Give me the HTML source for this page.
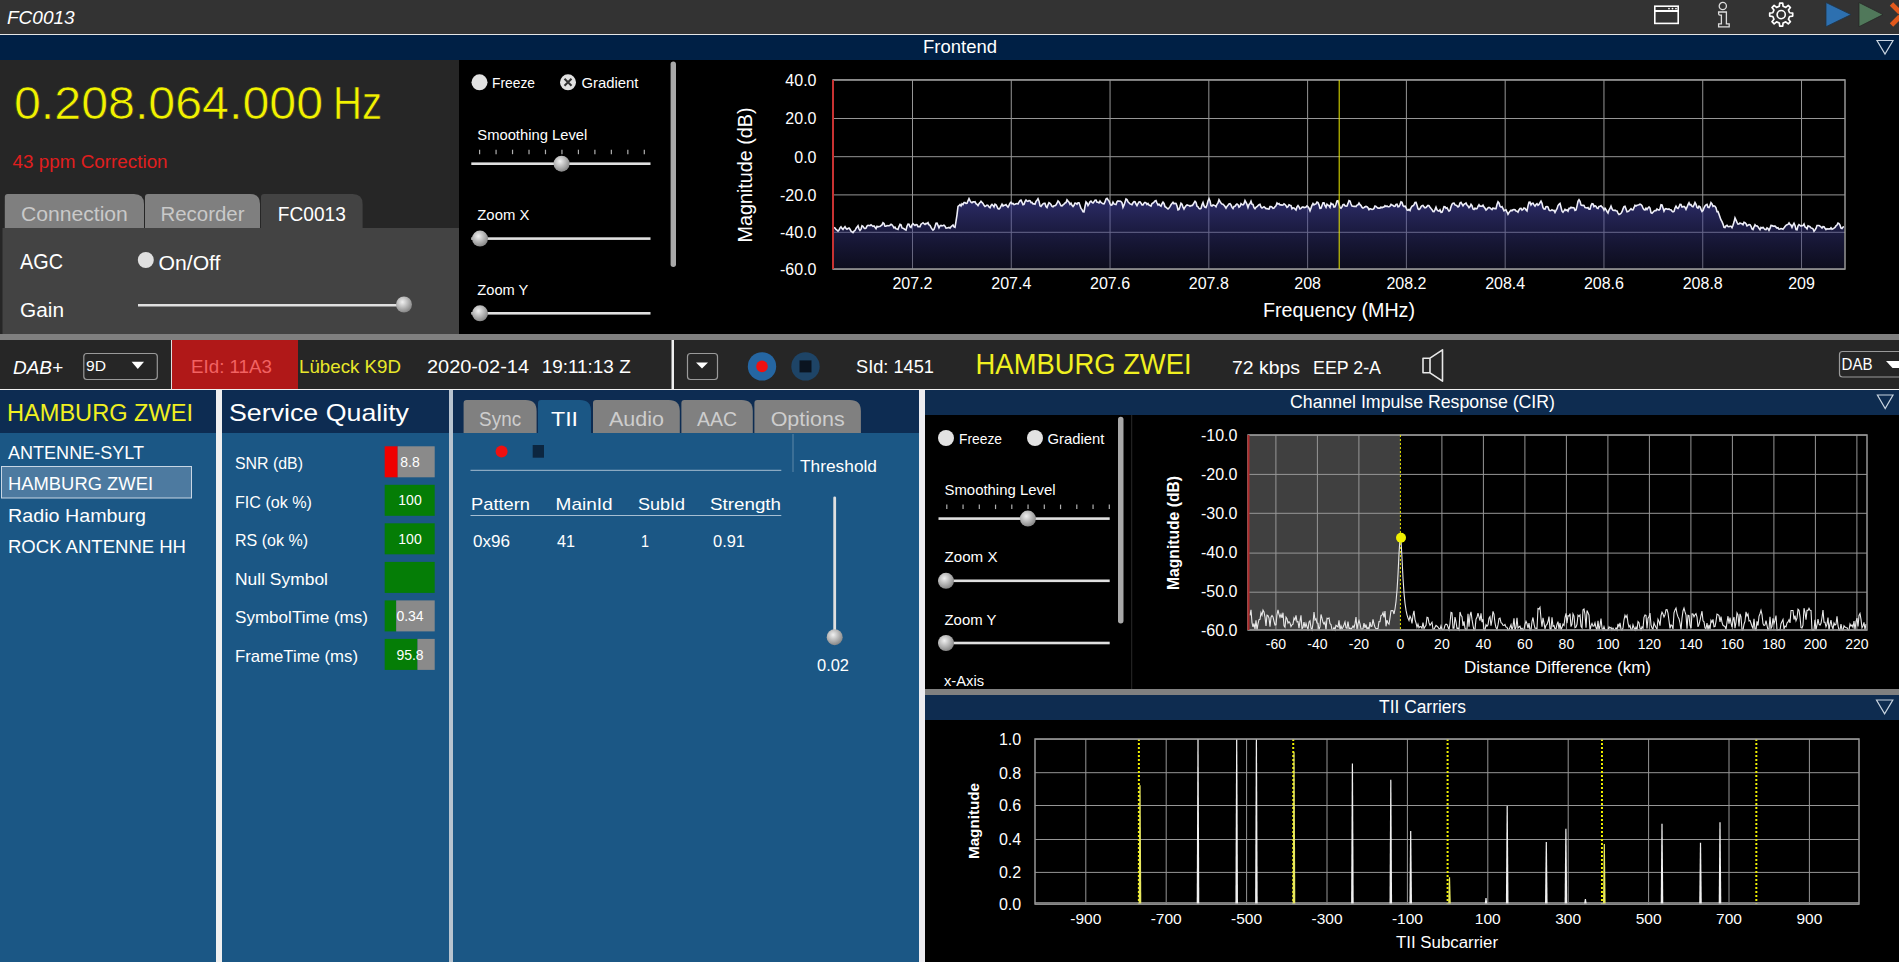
<!DOCTYPE html>
<html><head><meta charset="utf-8"><style>html,body{margin:0;padding:0;background:#000;overflow:hidden}svg{display:block}text{font-family:"Liberation Sans", sans-serif}</style></head>
<body><svg width="1899" height="962" viewBox="0 0 1899 962" font-family='"Liberation Sans", sans-serif'>
<rect x="0" y="0" width="1899" height="34" fill="#333333" />
<rect x="0" y="34" width="1899" height="1" fill="#e6e6e6" />
<rect x="0" y="35" width="1899" height="25" fill="#002045" />
<rect x="0" y="60" width="459" height="274" fill="#262626" />
<rect x="459" y="60" width="1440" height="274" fill="#000000" />
<rect x="0" y="334" width="1899" height="6" fill="#808080" />
<rect x="0" y="340" width="1899" height="49" fill="#262626" />
<rect x="0" y="389" width="1899" height="1" fill="#f0f0f0" />
<rect x="0" y="390" width="216" height="43" fill="#0d2c52" />
<rect x="0" y="433" width="216" height="529" fill="#1b5785" />
<rect x="222" y="390" width="227" height="43" fill="#0d2c52" />
<rect x="222" y="433" width="227" height="529" fill="#1b5785" />
<rect x="453" y="390" width="466" height="43" fill="#0d2c52" />
<rect x="453" y="433" width="466" height="529" fill="#1b5785" />
<rect x="216" y="390" width="6" height="572" fill="#f0f0f0" />
<rect x="449" y="390" width="4" height="572" fill="#b8c4d0" />
<rect x="919" y="390" width="6" height="572" fill="#ececf0" />
<rect x="925" y="390" width="974" height="25" fill="#0e2c50" />
<rect x="925" y="415" width="974" height="274" fill="#000" />
<rect x="925" y="689" width="974" height="6" fill="#808080" />
<rect x="925" y="695" width="974" height="25" fill="#0e2c50" />
<rect x="925" y="720" width="974" height="242" fill="#000" />
<text x="7" y="23.9" font-size="19" fill="#fff" text-anchor="start" font-style="italic">FC0013</text>
<g fill="none" stroke="#fff" stroke-width="1.6"><rect x="1654.8" y="6.2" width="23.4" height="17.2"/><line x1="1655" y1="11" x2="1678" y2="11" stroke-width="2"/></g>
<circle cx="1669" cy="8.6" r="0.9" fill="#fff"/>
<circle cx="1672.5" cy="8.6" r="0.9" fill="#fff"/>
<circle cx="1676" cy="8.6" r="0.9" fill="#fff"/>
<g fill="none" stroke="#ddd" stroke-width="1.3"><circle cx="1722.8" cy="6" r="3.6"/><path d="M1718.6 12 h7.8 v11.8 h2.8 v3 h-10.6 v-3 h2.8 v-8.6 h-1.4 q-1.4 0 -1.4 -1.6 z"/></g>
<polygon points="1789.59,12.72 1792.70,13.10 1792.70,16.10 1789.59,16.48 1788.46,19.21 1790.40,21.67 1788.27,23.80 1785.81,21.86 1783.08,22.99 1782.70,26.10 1779.70,26.10 1779.32,22.99 1776.59,21.86 1774.13,23.80 1772.00,21.67 1773.94,19.21 1772.81,16.48 1769.70,16.10 1769.70,13.10 1772.81,12.72 1773.94,9.99 1772.00,7.53 1774.13,5.40 1776.59,7.34 1779.32,6.21 1779.70,3.10 1782.70,3.10 1783.08,6.21 1785.81,7.34 1788.27,5.40 1790.40,7.53 1788.46,9.99" fill="none" stroke="#fff" stroke-width="1.7" stroke-linejoin="round"/>
<circle cx="1781.2" cy="14.6" r="4.1" fill="none" stroke="#fff" stroke-width="1.6"/>
<polygon points="1826,2.5 1851,14.6 1826,26.7" fill="#2d70b0" stroke="#1f3448" stroke-width="0.8"/>
<polygon points="1859,2.5 1883,14.6 1859,26.7" fill="#50785a" stroke="#262626" stroke-width="0.8"/>
<path d="M1891.5 4 L1900 12.5 M1891.5 25 L1900 16.5" stroke="#e2591c" stroke-width="4.8"/>
<text x="960" y="52.9" font-size="18" fill="#fff" text-anchor="middle" textLength="74" lengthAdjust="spacingAndGlyphs" >Frontend</text>
<polygon points="1877,40.5 1893,40.5 1885,54" fill="none" stroke="#c8d4e0" stroke-width="1.2"/>
<text x="14" y="119.2" font-size="46" fill="#f2f200" text-anchor="start" textLength="309" lengthAdjust="spacingAndGlyphs" stroke="#262626" stroke-width="0.6">0.208.064.000</text>
<text x="333" y="119.2" font-size="46" fill="#f2f200" text-anchor="start" textLength="49" lengthAdjust="spacingAndGlyphs" stroke="#262626" stroke-width="0.6">Hz</text>
<text x="12.6" y="167.6" font-size="18" fill="#e01e1e" text-anchor="start" textLength="155" lengthAdjust="spacingAndGlyphs" >43 ppm Correction</text>
<rect x="2.5" y="228" width="456.5" height="106" fill="#434343" />
<path d="M4.8 228 V197 Q4.8 194 7.8 194 H134 Q144 194 144 204 V228 Z" fill="#7f7f7f"/>
<text x="74.4" y="220.8" font-size="20" fill="#c9c9c9" text-anchor="middle" textLength="107" lengthAdjust="spacingAndGlyphs" >Connection</text>
<path d="M145 228 V197 Q145 194 148 194 H250 Q260 194 260 204 V228 Z" fill="#7f7f7f"/>
<text x="202.5" y="220.8" font-size="20" fill="#c9c9c9" text-anchor="middle" textLength="84" lengthAdjust="spacingAndGlyphs" >Recorder</text>
<path d="M261 228 V197 Q261 194 264 194 H352.6 Q362.6 194 362.6 204 V228 Z" fill="#434343"/>
<text x="311.8" y="220.8" font-size="20" fill="#fff" text-anchor="middle" textLength="68" lengthAdjust="spacingAndGlyphs" >FC0013</text>
<text x="20" y="268.8" font-size="21.5" fill="#fff" text-anchor="start" textLength="43" lengthAdjust="spacingAndGlyphs" >AGC</text>
<circle cx="145.8" cy="260" r="8" fill="#e0e0e0"/>
<text x="158.5" y="270.2" font-size="20.5" fill="#fff" text-anchor="start" textLength="62" lengthAdjust="spacingAndGlyphs" >On/Off</text>
<text x="20" y="316.8" font-size="20" fill="#fff" text-anchor="start" textLength="44" lengthAdjust="spacingAndGlyphs" >Gain</text>
<rect x="138" y="304" width="266" height="2.5" fill="#e0e0e0" />
<defs><radialGradient id="knob" cx="0.4" cy="0.35" r="0.7"><stop offset="0" stop-color="#f0f0f0"/><stop offset="1" stop-color="#808080"/></radialGradient></defs>
<circle cx="404" cy="304.5" r="8" fill="url(#knob)"/>
<circle cx="479.5" cy="82.3" r="8" fill="#e2e2e2"/>
<text x="492" y="87.8" font-size="15" fill="#fff" text-anchor="start" textLength="43" lengthAdjust="spacingAndGlyphs" >Freeze</text>
<circle cx="568" cy="82.3" r="8" fill="#e2e2e2"/>
<path d="M564.5 78.8 L571.5 85.8 M571.5 78.8 L564.5 85.8" stroke="#333" stroke-width="2"/>
<text x="581.5" y="87.8" font-size="15" fill="#fff" text-anchor="start" textLength="57" lengthAdjust="spacingAndGlyphs" >Gradient</text>
<rect x="670.6" y="61.5" width="5.4" height="205.5" fill="#a8a8a8" rx="2.7"/>
<text x="477.3" y="139.8" font-size="14.5" fill="#fff" text-anchor="start" textLength="110" lengthAdjust="spacingAndGlyphs" >Smoothing Level</text>
<line x1="479.6" y1="149.7" x2="479.6" y2="154.2" stroke="#b0b0b0" stroke-width="1.2" />
<line x1="496.07000000000005" y1="149.7" x2="496.07000000000005" y2="154.2" stroke="#b0b0b0" stroke-width="1.2" />
<line x1="512.54" y1="149.7" x2="512.54" y2="154.2" stroke="#b0b0b0" stroke-width="1.2" />
<line x1="529.01" y1="149.7" x2="529.01" y2="154.2" stroke="#b0b0b0" stroke-width="1.2" />
<line x1="545.48" y1="149.7" x2="545.48" y2="154.2" stroke="#b0b0b0" stroke-width="1.2" />
<line x1="561.95" y1="149.7" x2="561.95" y2="154.2" stroke="#b0b0b0" stroke-width="1.2" />
<line x1="578.4200000000001" y1="149.7" x2="578.4200000000001" y2="154.2" stroke="#b0b0b0" stroke-width="1.2" />
<line x1="594.89" y1="149.7" x2="594.89" y2="154.2" stroke="#b0b0b0" stroke-width="1.2" />
<line x1="611.36" y1="149.7" x2="611.36" y2="154.2" stroke="#b0b0b0" stroke-width="1.2" />
<line x1="627.83" y1="149.7" x2="627.83" y2="154.2" stroke="#b0b0b0" stroke-width="1.2" />
<line x1="644.3" y1="149.7" x2="644.3" y2="154.2" stroke="#b0b0b0" stroke-width="1.2" />
<rect x="471.3" y="162.39999999999998" width="179.2" height="2.6" fill="#e0e0e0" />
<circle cx="561.6" cy="163.7" r="8" fill="url(#knob)"/>
<text x="477.3" y="219.8" font-size="14.5" fill="#fff" text-anchor="start" textLength="52" lengthAdjust="spacingAndGlyphs" >Zoom X</text>
<rect x="471.3" y="237.29999999999998" width="179.2" height="2.6" fill="#e0e0e0" />
<circle cx="480" cy="238.6" r="8" fill="url(#knob)"/>
<text x="477.3" y="294.8" font-size="14.5" fill="#fff" text-anchor="start" textLength="51" lengthAdjust="spacingAndGlyphs" >Zoom Y</text>
<rect x="471.3" y="312.0" width="179.2" height="2.6" fill="#e0e0e0" />
<circle cx="480" cy="313.3" r="8" fill="url(#knob)"/>
<line x1="833" y1="79.8" x2="1845" y2="79.8" stroke="#969696" stroke-width="1" />
<line x1="833" y1="118.5" x2="1845" y2="118.5" stroke="#969696" stroke-width="1" />
<line x1="833" y1="156.7" x2="1845" y2="156.7" stroke="#969696" stroke-width="1" />
<line x1="833" y1="194.9" x2="1845" y2="194.9" stroke="#969696" stroke-width="1" />
<line x1="833" y1="232.3" x2="1845" y2="232.3" stroke="#969696" stroke-width="1" />
<line x1="833" y1="269.2" x2="1845" y2="269.2" stroke="#969696" stroke-width="1" />
<line x1="912.5" y1="80" x2="912.5" y2="269" stroke="#969696" stroke-width="1" />
<line x1="1011.2799999999944" y1="80" x2="1011.2799999999944" y2="269" stroke="#969696" stroke-width="1" />
<line x1="1110.0600000000027" y1="80" x2="1110.0600000000027" y2="269" stroke="#969696" stroke-width="1" />
<line x1="1208.8399999999972" y1="80" x2="1208.8399999999972" y2="269" stroke="#969696" stroke-width="1" />
<line x1="1307.6200000000056" y1="80" x2="1307.6200000000056" y2="269" stroke="#969696" stroke-width="1" />
<line x1="1406.4" y1="80" x2="1406.4" y2="269" stroke="#969696" stroke-width="1" />
<line x1="1505.1799999999944" y1="80" x2="1505.1799999999944" y2="269" stroke="#969696" stroke-width="1" />
<line x1="1603.9600000000028" y1="80" x2="1603.9600000000028" y2="269" stroke="#969696" stroke-width="1" />
<line x1="1702.739999999997" y1="80" x2="1702.739999999997" y2="269" stroke="#969696" stroke-width="1" />
<line x1="1801.5200000000054" y1="80" x2="1801.5200000000054" y2="269" stroke="#969696" stroke-width="1" />
<defs><linearGradient id="specfill" gradientUnits="userSpaceOnUse" x1="0" y1="200" x2="0" y2="269"><stop offset="0" stop-color="#4a4ab0" stop-opacity="0.58"/><stop offset="1" stop-color="#20204a" stop-opacity="0.4"/></linearGradient></defs>
<polygon points="833,269 834.0,227.4 835.0,228.1 836.0,229.5 837.0,230.2 838.0,231.1 839.0,230.1 840.0,228.0 841.0,226.9 842.0,228.4 843.0,229.4 844.0,227.9 845.0,226.7 846.0,228.4 847.0,229.2 848.0,228.4 849.0,228.0 850.0,229.3 851.0,231.2 852.0,231.8 853.0,232.6 854.0,231.2 855.0,230.5 856.0,228.4 857.0,227.1 858.0,225.7 859.0,228.8 860.0,230.4 861.0,229.2 862.0,225.8 863.0,226.4 864.0,227.9 865.0,228.6 866.0,228.2 867.0,226.1 868.0,225.3 869.0,225.5 870.0,225.6 871.0,224.8 872.0,225.6 873.0,226.3 874.0,226.0 875.0,227.3 876.0,228.6 877.0,226.4 878.0,226.8 879.0,226.5 880.0,226.5 881.0,225.7 882.0,224.9 883.0,222.8 884.0,223.5 885.0,226.3 886.0,226.3 887.0,225.5 888.0,225.7 889.0,225.6 890.0,225.2 891.0,224.2 892.0,224.9 893.0,226.1 894.0,227.8 895.0,227.2 896.0,228.8 897.0,229.1 898.0,229.5 899.0,226.6 900.0,224.3 901.0,224.9 902.0,227.9 903.0,228.3 904.0,228.8 905.0,229.6 906.0,230.1 907.0,226.2 908.0,224.1 909.0,224.3 910.0,226.7 911.0,227.5 912.0,224.8 913.0,223.6 914.0,224.7 915.0,225.5 916.0,224.7 917.0,224.8 918.0,226.6 919.0,226.6 920.0,226.7 921.0,224.3 922.0,223.5 923.0,222.7 924.0,223.7 925.0,224.5 926.0,223.4 927.0,223.6 928.0,222.7 929.0,224.9 930.0,225.3 931.0,227.4 932.0,228.9 933.0,230.1 934.0,229.3 935.0,226.4 936.0,223.2 937.0,223.1 938.0,225.4 939.0,227.8 940.0,225.9 941.0,225.4 942.0,225.8 943.0,225.6 944.0,225.2 945.0,226.2 946.0,228.1 947.0,228.0 948.0,227.7 949.0,227.4 950.0,228.2 951.0,226.7 952.0,225.8 953.0,225.0 954.0,226.9 955.0,227.3 956.0,221.4 957.0,214.8 958.0,206.4 959.0,205.7 960.0,204.6 961.0,206.0 962.0,203.8 963.0,204.6 964.0,202.5 965.0,202.6 966.0,203.5 967.0,203.3 968.0,200.8 969.0,198.6 970.0,200.7 971.0,202.1 972.0,202.8 973.0,201.9 974.0,201.9 975.0,201.6 976.0,203.6 977.0,204.3 978.0,205.6 979.0,203.8 980.0,202.6 981.0,201.2 982.0,202.4 983.0,203.5 984.0,205.4 985.0,206.5 986.0,205.9 987.0,205.1 988.0,205.5 989.0,206.9 990.0,207.7 991.0,205.4 992.0,204.4 993.0,205.4 994.0,207.0 995.0,204.1 996.0,204.7 997.0,206.7 998.0,208.6 999.0,209.1 1000.0,208.0 1001.0,206.0 1002.0,204.2 1003.0,206.0 1004.0,205.3 1005.0,205.2 1006.0,204.6 1007.0,206.1 1008.0,207.1 1009.0,205.4 1010.0,203.2 1011.0,202.2 1012.0,203.8 1013.0,203.5 1014.0,204.6 1015.0,204.3 1016.0,203.8 1017.0,203.6 1018.0,204.0 1019.0,202.1 1020.0,200.7 1021.0,200.1 1022.0,202.4 1023.0,204.8 1024.0,204.4 1025.0,201.7 1026.0,200.0 1027.0,201.1 1028.0,201.3 1029.0,200.5 1030.0,200.7 1031.0,202.6 1032.0,202.4 1033.0,204.0 1034.0,203.9 1035.0,204.3 1036.0,201.4 1037.0,200.3 1038.0,198.8 1039.0,201.2 1040.0,205.8 1041.0,206.5 1042.0,205.1 1043.0,203.8 1044.0,203.4 1045.0,203.4 1046.0,206.6 1047.0,207.6 1048.0,204.9 1049.0,202.7 1050.0,203.3 1051.0,204.5 1052.0,206.3 1053.0,206.7 1054.0,205.8 1055.0,205.7 1056.0,204.9 1057.0,203.2 1058.0,200.9 1059.0,202.0 1060.0,203.9 1061.0,205.8 1062.0,205.9 1063.0,204.9 1064.0,204.2 1065.0,202.9 1066.0,202.6 1067.0,199.9 1068.0,201.1 1069.0,202.2 1070.0,204.3 1071.0,203.2 1072.0,205.4 1073.0,206.5 1074.0,205.2 1075.0,203.2 1076.0,203.3 1077.0,204.3 1078.0,202.7 1079.0,202.7 1080.0,205.4 1081.0,208.4 1082.0,209.6 1083.0,211.7 1084.0,211.8 1085.0,206.5 1086.0,201.9 1087.0,202.9 1088.0,205.5 1089.0,203.9 1090.0,201.8 1091.0,201.1 1092.0,202.4 1093.0,202.9 1094.0,201.8 1095.0,200.2 1096.0,200.1 1097.0,202.2 1098.0,202.2 1099.0,202.8 1100.0,201.0 1101.0,202.4 1102.0,203.1 1103.0,203.7 1104.0,203.8 1105.0,202.0 1106.0,199.0 1107.0,198.4 1108.0,199.8 1109.0,200.9 1110.0,203.6 1111.0,205.3 1112.0,204.8 1113.0,202.2 1114.0,203.9 1115.0,204.3 1116.0,204.6 1117.0,201.8 1118.0,200.9 1119.0,201.2 1120.0,201.0 1121.0,201.6 1122.0,202.9 1123.0,207.3 1124.0,205.2 1125.0,202.2 1126.0,199.0 1127.0,199.6 1128.0,201.7 1129.0,202.7 1130.0,203.9 1131.0,204.2 1132.0,204.7 1133.0,202.8 1134.0,201.7 1135.0,201.8 1136.0,204.0 1137.0,205.6 1138.0,203.7 1139.0,202.0 1140.0,201.8 1141.0,203.2 1142.0,205.0 1143.0,205.0 1144.0,203.2 1145.0,202.4 1146.0,202.8 1147.0,204.4 1148.0,203.5 1149.0,205.1 1150.0,205.5 1151.0,206.1 1152.0,203.5 1153.0,203.0 1154.0,202.2 1155.0,201.0 1156.0,200.6 1157.0,203.0 1158.0,205.0 1159.0,204.1 1160.0,205.4 1161.0,206.2 1162.0,203.7 1163.0,202.2 1164.0,203.4 1165.0,206.6 1166.0,207.2 1167.0,208.2 1168.0,209.0 1169.0,208.0 1170.0,206.6 1171.0,204.8 1172.0,203.6 1173.0,202.4 1174.0,203.8 1175.0,203.3 1176.0,203.4 1177.0,205.9 1178.0,209.8 1179.0,209.4 1180.0,206.5 1181.0,203.3 1182.0,204.2 1183.0,207.1 1184.0,209.0 1185.0,207.2 1186.0,205.7 1187.0,204.9 1188.0,205.3 1189.0,205.5 1190.0,206.3 1191.0,205.6 1192.0,205.6 1193.0,204.7 1194.0,202.8 1195.0,201.3 1196.0,202.4 1197.0,206.3 1198.0,206.9 1199.0,208.4 1200.0,208.9 1201.0,208.4 1202.0,204.8 1203.0,202.6 1204.0,205.8 1205.0,207.3 1206.0,207.5 1207.0,204.8 1208.0,201.0 1209.0,198.7 1210.0,201.0 1211.0,205.6 1212.0,206.0 1213.0,204.9 1214.0,205.3 1215.0,205.6 1216.0,206.8 1217.0,204.3 1218.0,203.0 1219.0,199.8 1220.0,201.5 1221.0,203.0 1222.0,204.0 1223.0,204.3 1224.0,205.2 1225.0,206.5 1226.0,208.2 1227.0,206.4 1228.0,205.3 1229.0,203.9 1230.0,203.6 1231.0,205.0 1232.0,207.4 1233.0,208.6 1234.0,206.4 1235.0,206.2 1236.0,204.9 1237.0,204.0 1238.0,204.7 1239.0,207.2 1240.0,206.3 1241.0,203.6 1242.0,204.6 1243.0,204.8 1244.0,203.8 1245.0,200.6 1246.0,202.4 1247.0,204.4 1248.0,207.4 1249.0,204.5 1250.0,203.5 1251.0,201.2 1252.0,204.3 1253.0,204.4 1254.0,207.7 1255.0,208.8 1256.0,207.4 1257.0,206.7 1258.0,205.6 1259.0,204.8 1260.0,204.3 1261.0,207.1 1262.0,208.0 1263.0,207.3 1264.0,206.7 1265.0,207.6 1266.0,208.6 1267.0,208.5 1268.0,209.0 1269.0,209.1 1270.0,206.6 1271.0,206.5 1272.0,207.2 1273.0,208.3 1274.0,208.0 1275.0,206.7 1276.0,205.8 1277.0,203.0 1278.0,204.1 1279.0,203.6 1280.0,204.9 1281.0,204.9 1282.0,205.1 1283.0,205.0 1284.0,203.8 1285.0,204.6 1286.0,205.8 1287.0,207.3 1288.0,206.7 1289.0,204.8 1290.0,205.3 1291.0,205.6 1292.0,208.8 1293.0,207.8 1294.0,208.0 1295.0,209.0 1296.0,210.0 1297.0,206.9 1298.0,205.6 1299.0,207.0 1300.0,208.9 1301.0,208.4 1302.0,207.2 1303.0,206.9 1304.0,207.6 1305.0,207.4 1306.0,207.0 1307.0,205.9 1308.0,206.8 1309.0,208.2 1310.0,210.7 1311.0,208.1 1312.0,205.3 1313.0,203.5 1314.0,204.9 1315.0,204.2 1316.0,203.9 1317.0,202.0 1318.0,202.6 1319.0,204.8 1320.0,208.4 1321.0,208.3 1322.0,205.5 1323.0,202.7 1324.0,202.7 1325.0,205.7 1326.0,207.4 1327.0,204.2 1328.0,205.2 1329.0,205.7 1330.0,207.2 1331.0,203.3 1332.0,204.2 1333.0,204.2 1334.0,207.1 1335.0,206.9 1336.0,204.3 1337.0,201.0 1338.0,200.7 1339.0,204.2 1340.0,207.5 1341.0,208.1 1342.0,206.9 1343.0,204.7 1344.0,204.4 1345.0,205.8 1346.0,206.2 1347.0,206.0 1348.0,203.4 1349.0,200.6 1350.0,201.0 1351.0,204.0 1352.0,206.1 1353.0,206.3 1354.0,206.4 1355.0,206.3 1356.0,206.6 1357.0,205.1 1358.0,204.9 1359.0,203.1 1360.0,204.7 1361.0,205.6 1362.0,207.4 1363.0,208.1 1364.0,207.6 1365.0,206.8 1366.0,206.4 1367.0,206.7 1368.0,207.8 1369.0,209.7 1370.0,208.7 1371.0,209.0 1372.0,209.5 1373.0,209.2 1374.0,208.4 1375.0,206.0 1376.0,206.4 1377.0,207.3 1378.0,208.1 1379.0,208.1 1380.0,208.1 1381.0,207.0 1382.0,207.8 1383.0,207.1 1384.0,207.0 1385.0,205.7 1386.0,206.5 1387.0,206.0 1388.0,206.8 1389.0,206.8 1390.0,206.1 1391.0,204.3 1392.0,205.0 1393.0,205.5 1394.0,206.4 1395.0,206.2 1396.0,204.4 1397.0,204.2 1398.0,206.8 1399.0,206.6 1400.0,204.6 1401.0,201.9 1402.0,202.3 1403.0,205.6 1404.0,206.6 1405.0,206.1 1406.0,207.5 1407.0,209.9 1408.0,210.4 1409.0,209.5 1410.0,210.6 1411.0,207.8 1412.0,206.2 1413.0,205.8 1414.0,204.9 1415.0,202.4 1416.0,202.3 1417.0,205.2 1418.0,208.7 1419.0,209.4 1420.0,208.7 1421.0,206.8 1422.0,205.8 1423.0,205.4 1424.0,206.9 1425.0,207.9 1426.0,207.6 1427.0,206.4 1428.0,205.5 1429.0,205.8 1430.0,207.3 1431.0,208.5 1432.0,209.6 1433.0,211.5 1434.0,211.7 1435.0,209.6 1436.0,207.2 1437.0,209.7 1438.0,210.8 1439.0,211.0 1440.0,209.8 1441.0,212.4 1442.0,212.3 1443.0,209.8 1444.0,206.6 1445.0,206.7 1446.0,208.2 1447.0,207.8 1448.0,209.7 1449.0,211.2 1450.0,210.4 1451.0,206.8 1452.0,204.3 1453.0,203.2 1454.0,203.1 1455.0,204.9 1456.0,205.2 1457.0,205.9 1458.0,206.9 1459.0,206.2 1460.0,203.1 1461.0,202.4 1462.0,204.1 1463.0,205.8 1464.0,204.3 1465.0,203.8 1466.0,203.0 1467.0,205.1 1468.0,206.0 1469.0,207.7 1470.0,206.5 1471.0,204.3 1472.0,205.7 1473.0,209.0 1474.0,209.5 1475.0,208.2 1476.0,208.9 1477.0,208.6 1478.0,206.4 1479.0,204.8 1480.0,206.4 1481.0,206.1 1482.0,206.4 1483.0,205.2 1484.0,207.1 1485.0,208.3 1486.0,210.0 1487.0,209.1 1488.0,207.8 1489.0,207.4 1490.0,207.8 1491.0,209.0 1492.0,209.6 1493.0,208.0 1494.0,208.4 1495.0,208.6 1496.0,208.6 1497.0,204.6 1498.0,201.8 1499.0,203.0 1500.0,206.3 1501.0,207.1 1502.0,206.6 1503.0,208.6 1504.0,210.9 1505.0,210.2 1506.0,209.8 1507.0,212.0 1508.0,214.2 1509.0,212.6 1510.0,211.2 1511.0,210.3 1512.0,210.8 1513.0,209.8 1514.0,209.5 1515.0,209.8 1516.0,211.1 1517.0,211.2 1518.0,212.2 1519.0,210.0 1520.0,208.5 1521.0,208.4 1522.0,210.1 1523.0,209.5 1524.0,207.9 1525.0,208.3 1526.0,209.9 1527.0,210.9 1528.0,205.9 1529.0,202.3 1530.0,202.2 1531.0,204.9 1532.0,203.4 1533.0,203.1 1534.0,204.9 1535.0,206.2 1536.0,204.6 1537.0,203.7 1538.0,205.3 1539.0,204.4 1540.0,202.7 1541.0,201.2 1542.0,203.3 1543.0,207.6 1544.0,209.0 1545.0,209.1 1546.0,206.7 1547.0,206.5 1548.0,207.1 1549.0,210.0 1550.0,210.7 1551.0,210.6 1552.0,209.7 1553.0,210.5 1554.0,210.3 1555.0,212.4 1556.0,210.4 1557.0,208.7 1558.0,205.6 1559.0,204.2 1560.0,203.4 1561.0,207.3 1562.0,211.1 1563.0,212.2 1564.0,210.9 1565.0,209.3 1566.0,210.5 1567.0,209.9 1568.0,211.2 1569.0,208.4 1570.0,208.4 1571.0,207.3 1572.0,207.8 1573.0,207.5 1574.0,207.8 1575.0,210.5 1576.0,210.0 1577.0,206.1 1578.0,201.3 1579.0,199.7 1580.0,201.3 1581.0,204.9 1582.0,205.4 1583.0,205.2 1584.0,205.5 1585.0,207.6 1586.0,207.7 1587.0,208.0 1588.0,207.6 1589.0,209.1 1590.0,209.1 1591.0,205.6 1592.0,203.6 1593.0,203.9 1594.0,206.6 1595.0,205.7 1596.0,206.3 1597.0,208.2 1598.0,208.5 1599.0,206.4 1600.0,206.2 1601.0,205.7 1602.0,206.9 1603.0,207.9 1604.0,210.1 1605.0,208.2 1606.0,209.7 1607.0,211.5 1608.0,213.0 1609.0,210.1 1610.0,208.5 1611.0,206.2 1612.0,208.8 1613.0,210.2 1614.0,210.5 1615.0,210.2 1616.0,210.7 1617.0,211.0 1618.0,213.1 1619.0,214.5 1620.0,214.1 1621.0,213.3 1622.0,211.7 1623.0,208.9 1624.0,206.7 1625.0,206.3 1626.0,208.9 1627.0,211.8 1628.0,211.5 1629.0,210.8 1630.0,209.7 1631.0,208.7 1632.0,209.7 1633.0,209.9 1634.0,207.7 1635.0,205.3 1636.0,206.1 1637.0,205.3 1638.0,205.1 1639.0,204.7 1640.0,204.1 1641.0,204.6 1642.0,205.7 1643.0,208.2 1644.0,209.5 1645.0,210.0 1646.0,208.2 1647.0,209.5 1648.0,207.9 1649.0,206.9 1650.0,208.1 1651.0,212.7 1652.0,213.3 1653.0,212.2 1654.0,211.1 1655.0,210.5 1656.0,210.7 1657.0,209.0 1658.0,209.8 1659.0,210.1 1660.0,209.0 1661.0,204.7 1662.0,205.0 1663.0,208.0 1664.0,211.1 1665.0,209.2 1666.0,208.7 1667.0,208.9 1668.0,209.3 1669.0,208.9 1670.0,209.8 1671.0,209.8 1672.0,211.1 1673.0,211.9 1674.0,211.5 1675.0,208.0 1676.0,206.1 1677.0,207.9 1678.0,208.5 1679.0,207.0 1680.0,204.4 1681.0,204.5 1682.0,207.1 1683.0,206.8 1684.0,206.5 1685.0,207.3 1686.0,209.4 1687.0,207.2 1688.0,204.6 1689.0,202.7 1690.0,204.9 1691.0,204.7 1692.0,206.3 1693.0,206.8 1694.0,204.9 1695.0,202.5 1696.0,204.3 1697.0,207.5 1698.0,208.1 1699.0,206.1 1700.0,206.7 1701.0,209.4 1702.0,211.4 1703.0,210.5 1704.0,207.9 1705.0,205.9 1706.0,204.8 1707.0,204.4 1708.0,207.4 1709.0,207.6 1710.0,205.6 1711.0,202.6 1712.0,203.8 1713.0,206.4 1714.0,205.8 1715.0,206.3 1716.0,207.9 1717.0,211.6 1718.0,211.6 1719.0,214.3 1720.0,217.2 1721.0,220.0 1722.0,221.6 1723.0,224.1 1724.0,227.3 1725.0,227.5 1726.0,225.8 1727.0,225.3 1728.0,226.5 1729.0,226.7 1730.0,226.3 1731.0,226.3 1732.0,227.7 1733.0,225.2 1734.0,222.1 1735.0,218.0 1736.0,220.2 1737.0,222.4 1738.0,224.2 1739.0,224.1 1740.0,223.0 1741.0,223.6 1742.0,223.8 1743.0,224.7 1744.0,222.3 1745.0,222.6 1746.0,223.7 1747.0,225.8 1748.0,225.3 1749.0,224.5 1750.0,224.7 1751.0,226.3 1752.0,228.9 1753.0,229.5 1754.0,227.0 1755.0,224.7 1756.0,226.0 1757.0,225.9 1758.0,226.7 1759.0,228.2 1760.0,229.7 1761.0,227.4 1762.0,228.1 1763.0,227.3 1764.0,228.5 1765.0,229.4 1766.0,229.6 1767.0,227.8 1768.0,228.5 1769.0,230.3 1770.0,228.5 1771.0,225.4 1772.0,225.5 1773.0,226.2 1774.0,226.0 1775.0,226.1 1776.0,227.1 1777.0,228.1 1778.0,227.7 1779.0,229.2 1780.0,229.0 1781.0,228.6 1782.0,228.7 1783.0,229.3 1784.0,227.9 1785.0,226.6 1786.0,225.3 1787.0,224.8 1788.0,224.4 1789.0,223.0 1790.0,224.5 1791.0,225.1 1792.0,227.4 1793.0,225.0 1794.0,223.3 1795.0,225.4 1796.0,229.6 1797.0,229.8 1798.0,226.1 1799.0,224.6 1800.0,225.3 1801.0,226.0 1802.0,225.7 1803.0,225.5 1804.0,224.1 1805.0,227.0 1806.0,227.6 1807.0,228.8 1808.0,225.9 1809.0,226.3 1810.0,226.7 1811.0,227.9 1812.0,228.3 1813.0,228.8 1814.0,231.2 1815.0,230.0 1816.0,228.4 1817.0,225.5 1818.0,225.5 1819.0,225.5 1820.0,226.2 1821.0,227.0 1822.0,228.0 1823.0,226.7 1824.0,226.8 1825.0,228.2 1826.0,229.5 1827.0,228.7 1828.0,229.2 1829.0,228.8 1830.0,229.0 1831.0,227.8 1832.0,229.2 1833.0,228.8 1834.0,228.2 1835.0,227.5 1836.0,225.8 1837.0,225.0 1838.0,223.1 1839.0,223.6 1840.0,225.2 1841.0,228.2 1842.0,228.5 1843.0,227.1 1844.0,226.6 1845,269" fill="url(#specfill)" />
<polyline points="834.0,227.4 835.0,228.1 836.0,229.5 837.0,230.2 838.0,231.1 839.0,230.1 840.0,228.0 841.0,226.9 842.0,228.4 843.0,229.4 844.0,227.9 845.0,226.7 846.0,228.4 847.0,229.2 848.0,228.4 849.0,228.0 850.0,229.3 851.0,231.2 852.0,231.8 853.0,232.6 854.0,231.2 855.0,230.5 856.0,228.4 857.0,227.1 858.0,225.7 859.0,228.8 860.0,230.4 861.0,229.2 862.0,225.8 863.0,226.4 864.0,227.9 865.0,228.6 866.0,228.2 867.0,226.1 868.0,225.3 869.0,225.5 870.0,225.6 871.0,224.8 872.0,225.6 873.0,226.3 874.0,226.0 875.0,227.3 876.0,228.6 877.0,226.4 878.0,226.8 879.0,226.5 880.0,226.5 881.0,225.7 882.0,224.9 883.0,222.8 884.0,223.5 885.0,226.3 886.0,226.3 887.0,225.5 888.0,225.7 889.0,225.6 890.0,225.2 891.0,224.2 892.0,224.9 893.0,226.1 894.0,227.8 895.0,227.2 896.0,228.8 897.0,229.1 898.0,229.5 899.0,226.6 900.0,224.3 901.0,224.9 902.0,227.9 903.0,228.3 904.0,228.8 905.0,229.6 906.0,230.1 907.0,226.2 908.0,224.1 909.0,224.3 910.0,226.7 911.0,227.5 912.0,224.8 913.0,223.6 914.0,224.7 915.0,225.5 916.0,224.7 917.0,224.8 918.0,226.6 919.0,226.6 920.0,226.7 921.0,224.3 922.0,223.5 923.0,222.7 924.0,223.7 925.0,224.5 926.0,223.4 927.0,223.6 928.0,222.7 929.0,224.9 930.0,225.3 931.0,227.4 932.0,228.9 933.0,230.1 934.0,229.3 935.0,226.4 936.0,223.2 937.0,223.1 938.0,225.4 939.0,227.8 940.0,225.9 941.0,225.4 942.0,225.8 943.0,225.6 944.0,225.2 945.0,226.2 946.0,228.1 947.0,228.0 948.0,227.7 949.0,227.4 950.0,228.2 951.0,226.7 952.0,225.8 953.0,225.0 954.0,226.9 955.0,227.3 956.0,221.4 957.0,214.8 958.0,206.4 959.0,205.7 960.0,204.6 961.0,206.0 962.0,203.8 963.0,204.6 964.0,202.5 965.0,202.6 966.0,203.5 967.0,203.3 968.0,200.8 969.0,198.6 970.0,200.7 971.0,202.1 972.0,202.8 973.0,201.9 974.0,201.9 975.0,201.6 976.0,203.6 977.0,204.3 978.0,205.6 979.0,203.8 980.0,202.6 981.0,201.2 982.0,202.4 983.0,203.5 984.0,205.4 985.0,206.5 986.0,205.9 987.0,205.1 988.0,205.5 989.0,206.9 990.0,207.7 991.0,205.4 992.0,204.4 993.0,205.4 994.0,207.0 995.0,204.1 996.0,204.7 997.0,206.7 998.0,208.6 999.0,209.1 1000.0,208.0 1001.0,206.0 1002.0,204.2 1003.0,206.0 1004.0,205.3 1005.0,205.2 1006.0,204.6 1007.0,206.1 1008.0,207.1 1009.0,205.4 1010.0,203.2 1011.0,202.2 1012.0,203.8 1013.0,203.5 1014.0,204.6 1015.0,204.3 1016.0,203.8 1017.0,203.6 1018.0,204.0 1019.0,202.1 1020.0,200.7 1021.0,200.1 1022.0,202.4 1023.0,204.8 1024.0,204.4 1025.0,201.7 1026.0,200.0 1027.0,201.1 1028.0,201.3 1029.0,200.5 1030.0,200.7 1031.0,202.6 1032.0,202.4 1033.0,204.0 1034.0,203.9 1035.0,204.3 1036.0,201.4 1037.0,200.3 1038.0,198.8 1039.0,201.2 1040.0,205.8 1041.0,206.5 1042.0,205.1 1043.0,203.8 1044.0,203.4 1045.0,203.4 1046.0,206.6 1047.0,207.6 1048.0,204.9 1049.0,202.7 1050.0,203.3 1051.0,204.5 1052.0,206.3 1053.0,206.7 1054.0,205.8 1055.0,205.7 1056.0,204.9 1057.0,203.2 1058.0,200.9 1059.0,202.0 1060.0,203.9 1061.0,205.8 1062.0,205.9 1063.0,204.9 1064.0,204.2 1065.0,202.9 1066.0,202.6 1067.0,199.9 1068.0,201.1 1069.0,202.2 1070.0,204.3 1071.0,203.2 1072.0,205.4 1073.0,206.5 1074.0,205.2 1075.0,203.2 1076.0,203.3 1077.0,204.3 1078.0,202.7 1079.0,202.7 1080.0,205.4 1081.0,208.4 1082.0,209.6 1083.0,211.7 1084.0,211.8 1085.0,206.5 1086.0,201.9 1087.0,202.9 1088.0,205.5 1089.0,203.9 1090.0,201.8 1091.0,201.1 1092.0,202.4 1093.0,202.9 1094.0,201.8 1095.0,200.2 1096.0,200.1 1097.0,202.2 1098.0,202.2 1099.0,202.8 1100.0,201.0 1101.0,202.4 1102.0,203.1 1103.0,203.7 1104.0,203.8 1105.0,202.0 1106.0,199.0 1107.0,198.4 1108.0,199.8 1109.0,200.9 1110.0,203.6 1111.0,205.3 1112.0,204.8 1113.0,202.2 1114.0,203.9 1115.0,204.3 1116.0,204.6 1117.0,201.8 1118.0,200.9 1119.0,201.2 1120.0,201.0 1121.0,201.6 1122.0,202.9 1123.0,207.3 1124.0,205.2 1125.0,202.2 1126.0,199.0 1127.0,199.6 1128.0,201.7 1129.0,202.7 1130.0,203.9 1131.0,204.2 1132.0,204.7 1133.0,202.8 1134.0,201.7 1135.0,201.8 1136.0,204.0 1137.0,205.6 1138.0,203.7 1139.0,202.0 1140.0,201.8 1141.0,203.2 1142.0,205.0 1143.0,205.0 1144.0,203.2 1145.0,202.4 1146.0,202.8 1147.0,204.4 1148.0,203.5 1149.0,205.1 1150.0,205.5 1151.0,206.1 1152.0,203.5 1153.0,203.0 1154.0,202.2 1155.0,201.0 1156.0,200.6 1157.0,203.0 1158.0,205.0 1159.0,204.1 1160.0,205.4 1161.0,206.2 1162.0,203.7 1163.0,202.2 1164.0,203.4 1165.0,206.6 1166.0,207.2 1167.0,208.2 1168.0,209.0 1169.0,208.0 1170.0,206.6 1171.0,204.8 1172.0,203.6 1173.0,202.4 1174.0,203.8 1175.0,203.3 1176.0,203.4 1177.0,205.9 1178.0,209.8 1179.0,209.4 1180.0,206.5 1181.0,203.3 1182.0,204.2 1183.0,207.1 1184.0,209.0 1185.0,207.2 1186.0,205.7 1187.0,204.9 1188.0,205.3 1189.0,205.5 1190.0,206.3 1191.0,205.6 1192.0,205.6 1193.0,204.7 1194.0,202.8 1195.0,201.3 1196.0,202.4 1197.0,206.3 1198.0,206.9 1199.0,208.4 1200.0,208.9 1201.0,208.4 1202.0,204.8 1203.0,202.6 1204.0,205.8 1205.0,207.3 1206.0,207.5 1207.0,204.8 1208.0,201.0 1209.0,198.7 1210.0,201.0 1211.0,205.6 1212.0,206.0 1213.0,204.9 1214.0,205.3 1215.0,205.6 1216.0,206.8 1217.0,204.3 1218.0,203.0 1219.0,199.8 1220.0,201.5 1221.0,203.0 1222.0,204.0 1223.0,204.3 1224.0,205.2 1225.0,206.5 1226.0,208.2 1227.0,206.4 1228.0,205.3 1229.0,203.9 1230.0,203.6 1231.0,205.0 1232.0,207.4 1233.0,208.6 1234.0,206.4 1235.0,206.2 1236.0,204.9 1237.0,204.0 1238.0,204.7 1239.0,207.2 1240.0,206.3 1241.0,203.6 1242.0,204.6 1243.0,204.8 1244.0,203.8 1245.0,200.6 1246.0,202.4 1247.0,204.4 1248.0,207.4 1249.0,204.5 1250.0,203.5 1251.0,201.2 1252.0,204.3 1253.0,204.4 1254.0,207.7 1255.0,208.8 1256.0,207.4 1257.0,206.7 1258.0,205.6 1259.0,204.8 1260.0,204.3 1261.0,207.1 1262.0,208.0 1263.0,207.3 1264.0,206.7 1265.0,207.6 1266.0,208.6 1267.0,208.5 1268.0,209.0 1269.0,209.1 1270.0,206.6 1271.0,206.5 1272.0,207.2 1273.0,208.3 1274.0,208.0 1275.0,206.7 1276.0,205.8 1277.0,203.0 1278.0,204.1 1279.0,203.6 1280.0,204.9 1281.0,204.9 1282.0,205.1 1283.0,205.0 1284.0,203.8 1285.0,204.6 1286.0,205.8 1287.0,207.3 1288.0,206.7 1289.0,204.8 1290.0,205.3 1291.0,205.6 1292.0,208.8 1293.0,207.8 1294.0,208.0 1295.0,209.0 1296.0,210.0 1297.0,206.9 1298.0,205.6 1299.0,207.0 1300.0,208.9 1301.0,208.4 1302.0,207.2 1303.0,206.9 1304.0,207.6 1305.0,207.4 1306.0,207.0 1307.0,205.9 1308.0,206.8 1309.0,208.2 1310.0,210.7 1311.0,208.1 1312.0,205.3 1313.0,203.5 1314.0,204.9 1315.0,204.2 1316.0,203.9 1317.0,202.0 1318.0,202.6 1319.0,204.8 1320.0,208.4 1321.0,208.3 1322.0,205.5 1323.0,202.7 1324.0,202.7 1325.0,205.7 1326.0,207.4 1327.0,204.2 1328.0,205.2 1329.0,205.7 1330.0,207.2 1331.0,203.3 1332.0,204.2 1333.0,204.2 1334.0,207.1 1335.0,206.9 1336.0,204.3 1337.0,201.0 1338.0,200.7 1339.0,204.2 1340.0,207.5 1341.0,208.1 1342.0,206.9 1343.0,204.7 1344.0,204.4 1345.0,205.8 1346.0,206.2 1347.0,206.0 1348.0,203.4 1349.0,200.6 1350.0,201.0 1351.0,204.0 1352.0,206.1 1353.0,206.3 1354.0,206.4 1355.0,206.3 1356.0,206.6 1357.0,205.1 1358.0,204.9 1359.0,203.1 1360.0,204.7 1361.0,205.6 1362.0,207.4 1363.0,208.1 1364.0,207.6 1365.0,206.8 1366.0,206.4 1367.0,206.7 1368.0,207.8 1369.0,209.7 1370.0,208.7 1371.0,209.0 1372.0,209.5 1373.0,209.2 1374.0,208.4 1375.0,206.0 1376.0,206.4 1377.0,207.3 1378.0,208.1 1379.0,208.1 1380.0,208.1 1381.0,207.0 1382.0,207.8 1383.0,207.1 1384.0,207.0 1385.0,205.7 1386.0,206.5 1387.0,206.0 1388.0,206.8 1389.0,206.8 1390.0,206.1 1391.0,204.3 1392.0,205.0 1393.0,205.5 1394.0,206.4 1395.0,206.2 1396.0,204.4 1397.0,204.2 1398.0,206.8 1399.0,206.6 1400.0,204.6 1401.0,201.9 1402.0,202.3 1403.0,205.6 1404.0,206.6 1405.0,206.1 1406.0,207.5 1407.0,209.9 1408.0,210.4 1409.0,209.5 1410.0,210.6 1411.0,207.8 1412.0,206.2 1413.0,205.8 1414.0,204.9 1415.0,202.4 1416.0,202.3 1417.0,205.2 1418.0,208.7 1419.0,209.4 1420.0,208.7 1421.0,206.8 1422.0,205.8 1423.0,205.4 1424.0,206.9 1425.0,207.9 1426.0,207.6 1427.0,206.4 1428.0,205.5 1429.0,205.8 1430.0,207.3 1431.0,208.5 1432.0,209.6 1433.0,211.5 1434.0,211.7 1435.0,209.6 1436.0,207.2 1437.0,209.7 1438.0,210.8 1439.0,211.0 1440.0,209.8 1441.0,212.4 1442.0,212.3 1443.0,209.8 1444.0,206.6 1445.0,206.7 1446.0,208.2 1447.0,207.8 1448.0,209.7 1449.0,211.2 1450.0,210.4 1451.0,206.8 1452.0,204.3 1453.0,203.2 1454.0,203.1 1455.0,204.9 1456.0,205.2 1457.0,205.9 1458.0,206.9 1459.0,206.2 1460.0,203.1 1461.0,202.4 1462.0,204.1 1463.0,205.8 1464.0,204.3 1465.0,203.8 1466.0,203.0 1467.0,205.1 1468.0,206.0 1469.0,207.7 1470.0,206.5 1471.0,204.3 1472.0,205.7 1473.0,209.0 1474.0,209.5 1475.0,208.2 1476.0,208.9 1477.0,208.6 1478.0,206.4 1479.0,204.8 1480.0,206.4 1481.0,206.1 1482.0,206.4 1483.0,205.2 1484.0,207.1 1485.0,208.3 1486.0,210.0 1487.0,209.1 1488.0,207.8 1489.0,207.4 1490.0,207.8 1491.0,209.0 1492.0,209.6 1493.0,208.0 1494.0,208.4 1495.0,208.6 1496.0,208.6 1497.0,204.6 1498.0,201.8 1499.0,203.0 1500.0,206.3 1501.0,207.1 1502.0,206.6 1503.0,208.6 1504.0,210.9 1505.0,210.2 1506.0,209.8 1507.0,212.0 1508.0,214.2 1509.0,212.6 1510.0,211.2 1511.0,210.3 1512.0,210.8 1513.0,209.8 1514.0,209.5 1515.0,209.8 1516.0,211.1 1517.0,211.2 1518.0,212.2 1519.0,210.0 1520.0,208.5 1521.0,208.4 1522.0,210.1 1523.0,209.5 1524.0,207.9 1525.0,208.3 1526.0,209.9 1527.0,210.9 1528.0,205.9 1529.0,202.3 1530.0,202.2 1531.0,204.9 1532.0,203.4 1533.0,203.1 1534.0,204.9 1535.0,206.2 1536.0,204.6 1537.0,203.7 1538.0,205.3 1539.0,204.4 1540.0,202.7 1541.0,201.2 1542.0,203.3 1543.0,207.6 1544.0,209.0 1545.0,209.1 1546.0,206.7 1547.0,206.5 1548.0,207.1 1549.0,210.0 1550.0,210.7 1551.0,210.6 1552.0,209.7 1553.0,210.5 1554.0,210.3 1555.0,212.4 1556.0,210.4 1557.0,208.7 1558.0,205.6 1559.0,204.2 1560.0,203.4 1561.0,207.3 1562.0,211.1 1563.0,212.2 1564.0,210.9 1565.0,209.3 1566.0,210.5 1567.0,209.9 1568.0,211.2 1569.0,208.4 1570.0,208.4 1571.0,207.3 1572.0,207.8 1573.0,207.5 1574.0,207.8 1575.0,210.5 1576.0,210.0 1577.0,206.1 1578.0,201.3 1579.0,199.7 1580.0,201.3 1581.0,204.9 1582.0,205.4 1583.0,205.2 1584.0,205.5 1585.0,207.6 1586.0,207.7 1587.0,208.0 1588.0,207.6 1589.0,209.1 1590.0,209.1 1591.0,205.6 1592.0,203.6 1593.0,203.9 1594.0,206.6 1595.0,205.7 1596.0,206.3 1597.0,208.2 1598.0,208.5 1599.0,206.4 1600.0,206.2 1601.0,205.7 1602.0,206.9 1603.0,207.9 1604.0,210.1 1605.0,208.2 1606.0,209.7 1607.0,211.5 1608.0,213.0 1609.0,210.1 1610.0,208.5 1611.0,206.2 1612.0,208.8 1613.0,210.2 1614.0,210.5 1615.0,210.2 1616.0,210.7 1617.0,211.0 1618.0,213.1 1619.0,214.5 1620.0,214.1 1621.0,213.3 1622.0,211.7 1623.0,208.9 1624.0,206.7 1625.0,206.3 1626.0,208.9 1627.0,211.8 1628.0,211.5 1629.0,210.8 1630.0,209.7 1631.0,208.7 1632.0,209.7 1633.0,209.9 1634.0,207.7 1635.0,205.3 1636.0,206.1 1637.0,205.3 1638.0,205.1 1639.0,204.7 1640.0,204.1 1641.0,204.6 1642.0,205.7 1643.0,208.2 1644.0,209.5 1645.0,210.0 1646.0,208.2 1647.0,209.5 1648.0,207.9 1649.0,206.9 1650.0,208.1 1651.0,212.7 1652.0,213.3 1653.0,212.2 1654.0,211.1 1655.0,210.5 1656.0,210.7 1657.0,209.0 1658.0,209.8 1659.0,210.1 1660.0,209.0 1661.0,204.7 1662.0,205.0 1663.0,208.0 1664.0,211.1 1665.0,209.2 1666.0,208.7 1667.0,208.9 1668.0,209.3 1669.0,208.9 1670.0,209.8 1671.0,209.8 1672.0,211.1 1673.0,211.9 1674.0,211.5 1675.0,208.0 1676.0,206.1 1677.0,207.9 1678.0,208.5 1679.0,207.0 1680.0,204.4 1681.0,204.5 1682.0,207.1 1683.0,206.8 1684.0,206.5 1685.0,207.3 1686.0,209.4 1687.0,207.2 1688.0,204.6 1689.0,202.7 1690.0,204.9 1691.0,204.7 1692.0,206.3 1693.0,206.8 1694.0,204.9 1695.0,202.5 1696.0,204.3 1697.0,207.5 1698.0,208.1 1699.0,206.1 1700.0,206.7 1701.0,209.4 1702.0,211.4 1703.0,210.5 1704.0,207.9 1705.0,205.9 1706.0,204.8 1707.0,204.4 1708.0,207.4 1709.0,207.6 1710.0,205.6 1711.0,202.6 1712.0,203.8 1713.0,206.4 1714.0,205.8 1715.0,206.3 1716.0,207.9 1717.0,211.6 1718.0,211.6 1719.0,214.3 1720.0,217.2 1721.0,220.0 1722.0,221.6 1723.0,224.1 1724.0,227.3 1725.0,227.5 1726.0,225.8 1727.0,225.3 1728.0,226.5 1729.0,226.7 1730.0,226.3 1731.0,226.3 1732.0,227.7 1733.0,225.2 1734.0,222.1 1735.0,218.0 1736.0,220.2 1737.0,222.4 1738.0,224.2 1739.0,224.1 1740.0,223.0 1741.0,223.6 1742.0,223.8 1743.0,224.7 1744.0,222.3 1745.0,222.6 1746.0,223.7 1747.0,225.8 1748.0,225.3 1749.0,224.5 1750.0,224.7 1751.0,226.3 1752.0,228.9 1753.0,229.5 1754.0,227.0 1755.0,224.7 1756.0,226.0 1757.0,225.9 1758.0,226.7 1759.0,228.2 1760.0,229.7 1761.0,227.4 1762.0,228.1 1763.0,227.3 1764.0,228.5 1765.0,229.4 1766.0,229.6 1767.0,227.8 1768.0,228.5 1769.0,230.3 1770.0,228.5 1771.0,225.4 1772.0,225.5 1773.0,226.2 1774.0,226.0 1775.0,226.1 1776.0,227.1 1777.0,228.1 1778.0,227.7 1779.0,229.2 1780.0,229.0 1781.0,228.6 1782.0,228.7 1783.0,229.3 1784.0,227.9 1785.0,226.6 1786.0,225.3 1787.0,224.8 1788.0,224.4 1789.0,223.0 1790.0,224.5 1791.0,225.1 1792.0,227.4 1793.0,225.0 1794.0,223.3 1795.0,225.4 1796.0,229.6 1797.0,229.8 1798.0,226.1 1799.0,224.6 1800.0,225.3 1801.0,226.0 1802.0,225.7 1803.0,225.5 1804.0,224.1 1805.0,227.0 1806.0,227.6 1807.0,228.8 1808.0,225.9 1809.0,226.3 1810.0,226.7 1811.0,227.9 1812.0,228.3 1813.0,228.8 1814.0,231.2 1815.0,230.0 1816.0,228.4 1817.0,225.5 1818.0,225.5 1819.0,225.5 1820.0,226.2 1821.0,227.0 1822.0,228.0 1823.0,226.7 1824.0,226.8 1825.0,228.2 1826.0,229.5 1827.0,228.7 1828.0,229.2 1829.0,228.8 1830.0,229.0 1831.0,227.8 1832.0,229.2 1833.0,228.8 1834.0,228.2 1835.0,227.5 1836.0,225.8 1837.0,225.0 1838.0,223.1 1839.0,223.6 1840.0,225.2 1841.0,228.2 1842.0,228.5 1843.0,227.1 1844.0,226.6" fill="none" stroke="#eeeef8" stroke-width="1.6"/>
<rect x="833" y="80" width="1012" height="189" fill="none" stroke="#969696" stroke-width="1.5"/>
<line x1="833" y1="80" x2="833" y2="269" stroke="#c83232" stroke-width="2" />
<line x1="1339.2" y1="80" x2="1339.2" y2="269" stroke="#e8e800" stroke-width="1" />
<text x="816.5" y="85.6" font-size="16" fill="#fff" text-anchor="end" >40.0</text>
<text x="816.5" y="124.3" font-size="16" fill="#fff" text-anchor="end" >20.0</text>
<text x="816.5" y="162.5" font-size="16" fill="#fff" text-anchor="end" >0.0</text>
<text x="816.5" y="200.7" font-size="16" fill="#fff" text-anchor="end" >-20.0</text>
<text x="816.5" y="238.1" font-size="16" fill="#fff" text-anchor="end" >-40.0</text>
<text x="816.5" y="275.0" font-size="16" fill="#fff" text-anchor="end" >-60.0</text>
<text x="912.5" y="288.8" font-size="16" fill="#fff" text-anchor="middle" >207.2</text>
<text x="1011.2799999999944" y="288.8" font-size="16" fill="#fff" text-anchor="middle" >207.4</text>
<text x="1110.0600000000027" y="288.8" font-size="16" fill="#fff" text-anchor="middle" >207.6</text>
<text x="1208.8399999999972" y="288.8" font-size="16" fill="#fff" text-anchor="middle" >207.8</text>
<text x="1307.6200000000056" y="288.8" font-size="16" fill="#fff" text-anchor="middle" >208</text>
<text x="1406.4" y="288.8" font-size="16" fill="#fff" text-anchor="middle" >208.2</text>
<text x="1505.1799999999944" y="288.8" font-size="16" fill="#fff" text-anchor="middle" >208.4</text>
<text x="1603.9600000000028" y="288.8" font-size="16" fill="#fff" text-anchor="middle" >208.6</text>
<text x="1702.739999999997" y="288.8" font-size="16" fill="#fff" text-anchor="middle" >208.8</text>
<text x="1801.5200000000054" y="288.8" font-size="16" fill="#fff" text-anchor="middle" >209</text>
<text transform="translate(751.5,175) rotate(-90)" x="0" y="0" font-size="20" fill="#fff" text-anchor="middle" textLength="135" lengthAdjust="spacingAndGlyphs">Magnitude (dB)</text>
<text x="1339" y="317.1" font-size="19.5" fill="#fff" text-anchor="middle" textLength="152" lengthAdjust="spacingAndGlyphs" >Frequency (MHz)</text>
<text x="13" y="373.9" font-size="19" fill="#fff" text-anchor="start" textLength="50" lengthAdjust="spacingAndGlyphs" font-style="italic">DAB+</text>
<rect x="83.8" y="353.5" width="73.5" height="26" rx="3" fill="none" stroke="#9a9a9a" stroke-width="1.2"/>
<text x="86" y="370.8" font-size="15.5" fill="#fff" text-anchor="start" textLength="20" lengthAdjust="spacingAndGlyphs" >9D</text>
<polygon points="131.6,361.7 144,361.7 137.8,368.9" fill="#fff"/>
<rect x="171" y="340" width="1" height="49" fill="#e0e0e0" />
<rect x="172" y="340" width="126" height="49" fill="#b01818" />
<text x="191" y="372.9" font-size="19" fill="#f26262" text-anchor="start" textLength="81" lengthAdjust="spacingAndGlyphs" >EId: 11A3</text>
<text x="299" y="372.9" font-size="19" fill="#e8e82a" text-anchor="start" textLength="102" lengthAdjust="spacingAndGlyphs" >Lübeck K9D</text>
<text x="427" y="372.9" font-size="19" fill="#fff" text-anchor="start" textLength="102" lengthAdjust="spacingAndGlyphs" >2020-02-14</text>
<text x="541.7" y="372.9" font-size="19" fill="#fff" text-anchor="start" textLength="89" lengthAdjust="spacingAndGlyphs" >19:11:13 Z</text>
<rect x="671.5" y="340" width="2.5" height="49" fill="#f0f0f0" />
<rect x="687.5" y="353.5" width="30" height="26" rx="3" fill="none" stroke="#9a9a9a" stroke-width="1.2"/>
<polygon points="696,362.5 708,362.5 702,368.5" fill="#fff"/>
<circle cx="762" cy="366.4" r="14.2" fill="#2566a2"/><circle cx="762" cy="366.4" r="5.8" fill="#f01010"/>
<circle cx="805.5" cy="366.4" r="14.2" fill="#1e4466"/>
<rect x="799.5" y="360.4" width="12" height="12" fill="#0a1420" />
<text x="856" y="372.9" font-size="19" fill="#fff" text-anchor="start" textLength="78" lengthAdjust="spacingAndGlyphs" >SId: 1451</text>
<text x="975.6" y="374.1" font-size="29" fill="#f0f020" text-anchor="start" textLength="216" lengthAdjust="spacingAndGlyphs" >HAMBURG ZWEI</text>
<text x="1232" y="373.9" font-size="19" fill="#fff" text-anchor="start" textLength="68" lengthAdjust="spacingAndGlyphs" >72 kbps</text>
<text x="1313" y="373.9" font-size="19" fill="#fff" text-anchor="start" textLength="68" lengthAdjust="spacingAndGlyphs" >EEP 2-A</text>
<path d="M1423 358.2 H1430 L1442.5 349.8 V381.2 L1430 372.8 H1423 Z M1430 358.2 V372.8" fill="none" stroke="#e8e8e8" stroke-width="1.6" stroke-linejoin="round"/>
<rect x="1839.5" y="351.5" width="70" height="25.5" rx="3" fill="none" stroke="#9a9a9a" stroke-width="1.2"/>
<text x="1841.5" y="370.3" font-size="16" fill="#fff" text-anchor="start" textLength="31" lengthAdjust="spacingAndGlyphs" >DAB</text>
<polygon points="1886,361 1899,361 1899,368 1892.5,368" fill="#fff"/>
<text x="7" y="420.9" font-size="23" fill="#f0f020" text-anchor="start" textLength="186" lengthAdjust="spacingAndGlyphs" >HAMBURG ZWEI</text>
<text x="8" y="458.9" font-size="19" fill="#fff" text-anchor="start" textLength="136" lengthAdjust="spacingAndGlyphs" >ANTENNE-SYLT</text>
<rect x="1.5" y="466.5" width="190" height="31.5" fill="#4d7aa0" stroke="#c8d6e4" stroke-width="1"/>
<text x="8" y="489.9" font-size="19" fill="#fff" text-anchor="start" textLength="145" lengthAdjust="spacingAndGlyphs" >HAMBURG ZWEI</text>
<text x="8" y="521.9" font-size="19" fill="#fff" text-anchor="start" textLength="138" lengthAdjust="spacingAndGlyphs" >Radio Hamburg</text>
<text x="8" y="552.9" font-size="19" fill="#fff" text-anchor="start" textLength="178" lengthAdjust="spacingAndGlyphs" >ROCK ANTENNE HH</text>
<text x="229" y="421.2" font-size="24" fill="#fff" text-anchor="start" textLength="180" lengthAdjust="spacingAndGlyphs" >Service Quality</text>
<text x="235" y="469.0" font-size="17" fill="#fff" text-anchor="start" textLength="68" lengthAdjust="spacingAndGlyphs" >SNR (dB)</text>
<rect x="384.7" y="446.3" width="13" height="31" fill="#f00000" />
<rect x="397.7" y="446.3" width="37" height="31" fill="#8a8a8a" />
<text x="410" y="466.9" font-size="14" fill="#fff" text-anchor="middle" >8.8</text>
<text x="235" y="507.5" font-size="17" fill="#fff" text-anchor="start" textLength="77" lengthAdjust="spacingAndGlyphs" >FIC (ok %)</text>
<rect x="384.7" y="484.8" width="50" height="31" fill="#057d06" />
<text x="410" y="505.4" font-size="14" fill="#fff" text-anchor="middle" >100</text>
<text x="235" y="546.0" font-size="17" fill="#fff" text-anchor="start" textLength="73" lengthAdjust="spacingAndGlyphs" >RS (ok %)</text>
<rect x="384.7" y="523.3" width="50" height="31" fill="#057d06" />
<text x="410" y="543.9" font-size="14" fill="#fff" text-anchor="middle" >100</text>
<text x="235" y="584.6" font-size="17" fill="#fff" text-anchor="start" textLength="93" lengthAdjust="spacingAndGlyphs" >Null Symbol</text>
<rect x="384.7" y="561.9" width="50" height="31" fill="#057d06" />
<text x="235" y="623.1" font-size="17" fill="#fff" text-anchor="start" textLength="133" lengthAdjust="spacingAndGlyphs" >SymbolTime (ms)</text>
<rect x="384.7" y="600.4" width="11.5" height="31" fill="#057d06" />
<rect x="396.2" y="600.4" width="38.5" height="31" fill="#8a8a8a" />
<text x="410" y="621.0" font-size="14" fill="#fff" text-anchor="middle" >0.34</text>
<text x="235" y="661.6" font-size="17" fill="#fff" text-anchor="start" textLength="123" lengthAdjust="spacingAndGlyphs" >FrameTime (ms)</text>
<rect x="384.7" y="638.9" width="32.8" height="31" fill="#057d06" />
<rect x="417.5" y="638.9" width="17.2" height="31" fill="#8a8a8a" />
<text x="410" y="659.5" font-size="14" fill="#fff" text-anchor="middle" >95.8</text>
<path d="M463.6 433 V403 Q463.6 400 466.6 400 H525.6 Q536.6 400 536.6 411 V433 Z" fill="#808080"/>
<text x="500.1" y="426.2" font-size="21" fill="#cdcdcd" text-anchor="middle" textLength="42" lengthAdjust="spacingAndGlyphs" >Sync</text>
<path d="M538 433 V403 Q538 400 541 400 H580 Q591 400 591 411 V433 Z" fill="#1b5785"/>
<text x="564.5" y="426.2" font-size="21" fill="#fff" text-anchor="middle" textLength="27" lengthAdjust="spacingAndGlyphs" >TII</text>
<path d="M593 433 V403 Q593 400 596 400 H668.8 Q679.8 400 679.8 411 V433 Z" fill="#808080"/>
<text x="636.4" y="426.2" font-size="21" fill="#cdcdcd" text-anchor="middle" textLength="55" lengthAdjust="spacingAndGlyphs" >Audio</text>
<path d="M681.4 433 V403 Q681.4 400 684.4 400 H741.8 Q752.8 400 752.8 411 V433 Z" fill="#808080"/>
<text x="717.0999999999999" y="426.2" font-size="21" fill="#cdcdcd" text-anchor="middle" textLength="40" lengthAdjust="spacingAndGlyphs" >AAC</text>
<path d="M754.4 433 V403 Q754.4 400 757.4 400 H849.9 Q860.9 400 860.9 411 V433 Z" fill="#808080"/>
<text x="807.65" y="426.2" font-size="21" fill="#cdcdcd" text-anchor="middle" textLength="74" lengthAdjust="spacingAndGlyphs" >Options</text>
<circle cx="501.6" cy="451.5" r="6" fill="#f01010"/>
<rect x="532.7" y="445" width="11.3" height="12.7" fill="#0c2640" />
<rect x="470.5" y="469.8" width="310.8" height="1" fill="#a6bed2" />
<rect x="792.5" y="434" width="1" height="38" fill="#5f87a8" />
<text x="800" y="471.7" font-size="17" fill="#fff" text-anchor="start" textLength="77" lengthAdjust="spacingAndGlyphs" >Threshold</text>
<text x="471" y="509.8" font-size="17" fill="#fff" text-anchor="start" textLength="59" lengthAdjust="spacingAndGlyphs" >Pattern</text>
<text x="555.6" y="509.8" font-size="17" fill="#fff" text-anchor="start" textLength="57" lengthAdjust="spacingAndGlyphs" >MainId</text>
<text x="638" y="509.8" font-size="17" fill="#fff" text-anchor="start" textLength="47" lengthAdjust="spacingAndGlyphs" >SubId</text>
<text x="710" y="509.8" font-size="17" fill="#fff" text-anchor="start" textLength="71" lengthAdjust="spacingAndGlyphs" >Strength</text>
<rect x="470.5" y="515" width="310.8" height="1" fill="#a6bed2" />
<text x="473" y="546.8" font-size="17" fill="#fff" text-anchor="start" textLength="37" lengthAdjust="spacingAndGlyphs" >0x96</text>
<text x="557" y="546.8" font-size="17" fill="#fff" text-anchor="start" textLength="18" lengthAdjust="spacingAndGlyphs" >41</text>
<text x="641" y="546.8" font-size="17" fill="#fff" text-anchor="start" textLength="8" lengthAdjust="spacingAndGlyphs" >1</text>
<text x="713" y="546.8" font-size="17" fill="#fff" text-anchor="start" textLength="32" lengthAdjust="spacingAndGlyphs" >0.91</text>
<rect x="833.3" y="496.4" width="2.8" height="141" fill="#e0e0e0" rx="1.4"/>
<circle cx="834.7" cy="637.2" r="8" fill="url(#knob)"/>
<text x="833" y="670.7" font-size="17" fill="#fff" text-anchor="middle" textLength="32" lengthAdjust="spacingAndGlyphs" >0.02</text>
<text x="1422.5" y="408.3" font-size="19" fill="#fff" text-anchor="middle" textLength="265" lengthAdjust="spacingAndGlyphs" >Channel Impulse Response (CIR)</text>
<polygon points="1877.4,395 1893,395 1885.2,408.6" fill="none" stroke="#c8d4e0" stroke-width="1.2"/>
<circle cx="946" cy="438" r="8" fill="#e2e2e2"/>
<text x="959" y="443.5" font-size="15" fill="#fff" text-anchor="start" textLength="43" lengthAdjust="spacingAndGlyphs" >Freeze</text>
<circle cx="1035" cy="438" r="8" fill="#e2e2e2"/>
<text x="1047.5" y="443.5" font-size="15" fill="#fff" text-anchor="start" textLength="57" lengthAdjust="spacingAndGlyphs" >Gradient</text>
<rect x="1118" y="416.8" width="5.5" height="206.6" fill="#a8a8a8" rx="2.7"/>
<rect x="1131.2" y="415" width="1" height="274" fill="#2a2a2a" />
<text x="944.5" y="495.1" font-size="14.5" fill="#fff" text-anchor="start" textLength="111" lengthAdjust="spacingAndGlyphs" >Smoothing Level</text>
<line x1="946.8" y1="504.6" x2="946.8" y2="509.1" stroke="#b0b0b0" stroke-width="1.2" />
<line x1="963.05" y1="504.6" x2="963.05" y2="509.1" stroke="#b0b0b0" stroke-width="1.2" />
<line x1="979.3" y1="504.6" x2="979.3" y2="509.1" stroke="#b0b0b0" stroke-width="1.2" />
<line x1="995.55" y1="504.6" x2="995.55" y2="509.1" stroke="#b0b0b0" stroke-width="1.2" />
<line x1="1011.8" y1="504.6" x2="1011.8" y2="509.1" stroke="#b0b0b0" stroke-width="1.2" />
<line x1="1028.05" y1="504.6" x2="1028.05" y2="509.1" stroke="#b0b0b0" stroke-width="1.2" />
<line x1="1044.3" y1="504.6" x2="1044.3" y2="509.1" stroke="#b0b0b0" stroke-width="1.2" />
<line x1="1060.55" y1="504.6" x2="1060.55" y2="509.1" stroke="#b0b0b0" stroke-width="1.2" />
<line x1="1076.8" y1="504.6" x2="1076.8" y2="509.1" stroke="#b0b0b0" stroke-width="1.2" />
<line x1="1093.05" y1="504.6" x2="1093.05" y2="509.1" stroke="#b0b0b0" stroke-width="1.2" />
<line x1="1109.3" y1="504.6" x2="1109.3" y2="509.1" stroke="#b0b0b0" stroke-width="1.2" />
<rect x="938.5" y="517.3000000000001" width="171.20000000000005" height="2.6" fill="#e0e0e0" />
<circle cx="1027.9" cy="518.6" r="8" fill="url(#knob)"/>
<text x="944.5" y="561.5" font-size="14.5" fill="#fff" text-anchor="start" textLength="53" lengthAdjust="spacingAndGlyphs" >Zoom X</text>
<rect x="938.5" y="579.5" width="171.20000000000005" height="2.6" fill="#e0e0e0" />
<circle cx="946" cy="580.8" r="8" fill="url(#knob)"/>
<text x="944.5" y="625.1" font-size="14.5" fill="#fff" text-anchor="start" textLength="52" lengthAdjust="spacingAndGlyphs" >Zoom Y</text>
<rect x="938.5" y="641.7" width="171.20000000000005" height="2.6" fill="#e0e0e0" />
<circle cx="946" cy="643" r="8" fill="url(#knob)"/>
<text x="944" y="686.3" font-size="14.5" fill="#fff" text-anchor="start" textLength="40" lengthAdjust="spacingAndGlyphs" >x-Axis</text>
<rect x="1248" y="435" width="152.4000000000001" height="195" fill="#404040" />
<line x1="1248" y1="435.1" x2="1867" y2="435.1" stroke="#969696" stroke-width="1" />
<line x1="1248" y1="474.4" x2="1867" y2="474.4" stroke="#969696" stroke-width="1" />
<line x1="1248" y1="513.3" x2="1867" y2="513.3" stroke="#969696" stroke-width="1" />
<line x1="1248" y1="553.1" x2="1867" y2="553.1" stroke="#969696" stroke-width="1" />
<line x1="1248" y1="592.2" x2="1867" y2="592.2" stroke="#969696" stroke-width="1" />
<line x1="1248" y1="630" x2="1867" y2="630" stroke="#969696" stroke-width="1" />
<line x1="1275.9" y1="435" x2="1275.9" y2="630" stroke="#969696" stroke-width="1" />
<line x1="1317.4" y1="435" x2="1317.4" y2="630" stroke="#969696" stroke-width="1" />
<line x1="1358.9" y1="435" x2="1358.9" y2="630" stroke="#969696" stroke-width="1" />
<line x1="1441.9" y1="435" x2="1441.9" y2="630" stroke="#969696" stroke-width="1" />
<line x1="1483.4" y1="435" x2="1483.4" y2="630" stroke="#969696" stroke-width="1" />
<line x1="1524.9" y1="435" x2="1524.9" y2="630" stroke="#969696" stroke-width="1" />
<line x1="1566.4" y1="435" x2="1566.4" y2="630" stroke="#969696" stroke-width="1" />
<line x1="1607.9" y1="435" x2="1607.9" y2="630" stroke="#969696" stroke-width="1" />
<line x1="1649.4" y1="435" x2="1649.4" y2="630" stroke="#969696" stroke-width="1" />
<line x1="1690.9" y1="435" x2="1690.9" y2="630" stroke="#969696" stroke-width="1" />
<line x1="1732.4" y1="435" x2="1732.4" y2="630" stroke="#969696" stroke-width="1" />
<line x1="1773.9" y1="435" x2="1773.9" y2="630" stroke="#969696" stroke-width="1" />
<line x1="1815.4" y1="435" x2="1815.4" y2="630" stroke="#969696" stroke-width="1" />
<line x1="1856.9" y1="435" x2="1856.9" y2="630" stroke="#969696" stroke-width="1" />
<polyline points="1250.0,615.3 1251.0,609.9 1252.0,622.6 1253.0,627.0 1254.0,623.5 1255.0,629.1 1256.0,620.3 1257.0,629.8 1258.0,623.9 1259.0,619.7 1260.0,619.3 1261.0,612.7 1262.0,615.3 1263.0,610.2 1264.0,612.0 1265.0,617.2 1266.0,626.0 1267.0,615.1 1268.0,615.7 1269.0,618.1 1270.0,626.6 1271.0,617.1 1272.0,615.5 1273.0,617.0 1274.0,621.3 1275.0,625.0 1276.0,624.8 1277.0,614.5 1278.0,609.8 1279.0,614.3 1280.0,617.3 1281.0,614.3 1282.0,617.8 1283.0,612.7 1284.0,625.9 1285.0,627.3 1286.0,617.2 1287.0,618.8 1288.0,623.2 1289.0,621.7 1290.0,623.0 1291.0,626.6 1292.0,624.8 1293.0,624.2 1294.0,618.0 1295.0,619.9 1296.0,615.3 1297.0,621.9 1298.0,621.7 1299.0,628.1 1300.0,621.2 1301.0,615.4 1302.0,628.7 1303.0,627.4 1304.0,622.2 1305.0,627.6 1306.0,623.3 1307.0,626.7 1308.0,629.1 1309.0,622.1 1310.0,620.9 1311.0,628.1 1312.0,629.9 1313.0,623.5 1314.0,612.0 1315.0,620.0 1316.0,618.8 1317.0,623.0 1318.0,623.3 1319.0,629.9 1320.0,626.4 1321.0,614.5 1322.0,618.1 1323.0,622.3 1324.0,624.1 1325.0,622.2 1326.0,629.9 1327.0,618.2 1328.0,618.6 1329.0,618.0 1330.0,623.7 1331.0,624.5 1332.0,629.8 1333.0,629.8 1334.0,627.5 1335.0,629.7 1336.0,625.3 1337.0,626.1 1338.0,626.9 1339.0,620.4 1340.0,629.8 1341.0,626.0 1342.0,629.0 1343.0,627.2 1344.0,624.7 1345.0,621.9 1346.0,627.9 1347.0,628.2 1348.0,621.5 1349.0,628.6 1350.0,628.2 1351.0,629.4 1352.0,627.9 1353.0,626.0 1354.0,627.8 1355.0,623.7 1356.0,617.1 1357.0,629.6 1358.0,623.6 1359.0,620.5 1360.0,623.8 1361.0,628.9 1362.0,629.5 1363.0,628.7 1364.0,623.0 1365.0,627.8 1366.0,624.5 1367.0,629.3 1368.0,627.5 1369.0,629.1 1370.0,622.2 1371.0,626.5 1372.0,626.1 1373.0,619.3 1374.0,624.0 1375.0,627.3 1376.0,628.7 1377.0,628.6 1378.0,628.5 1379.0,621.6 1380.0,621.7 1381.0,615.6 1382.0,615.2 1383.0,612.6 1384.0,617.4 1385.0,611.0 1386.0,626.3 1387.0,620.1 1388.0,623.1 1389.0,624.3 1390.0,617.8 1391.0,610.7 1392.0,610.5 1393.0,610.7 1394.0,614.0 1395.0,609.0 1396.0,601.6 1397.0,590.5 1398.0,574.4 1399.0,554.0 1400.0,538.1 1401.0,540.2 1402.0,558.2 1403.0,578.0 1404.0,593.1 1405.0,603.3 1406.0,610.2 1407.0,614.8 1408.0,618.1 1409.0,620.4 1410.0,616.2 1411.0,618.4 1412.0,623.5 1413.0,615.3 1414.0,610.8 1415.0,619.6 1416.0,622.8 1417.0,627.2 1418.0,624.1 1419.0,627.8 1420.0,626.5 1421.0,626.7 1422.0,628.3 1423.0,622.5 1424.0,628.6 1425.0,626.7 1426.0,625.2 1427.0,617.2 1428.0,617.6 1429.0,622.9 1430.0,625.3 1431.0,623.8 1432.0,622.2 1433.0,629.3 1434.0,629.3 1435.0,627.2 1436.0,625.4 1437.0,626.2 1438.0,627.2 1439.0,628.7 1440.0,629.5 1441.0,625.9 1442.0,629.5 1443.0,629.6 1444.0,629.2 1445.0,625.2 1446.0,624.2 1447.0,624.4 1448.0,627.0 1449.0,629.7 1450.0,623.5 1451.0,612.3 1452.0,612.8 1453.0,628.1 1454.0,628.1 1455.0,617.0 1456.0,621.8 1457.0,628.4 1458.0,628.2 1459.0,629.8 1460.0,612.0 1461.0,615.3 1462.0,616.7 1463.0,625.9 1464.0,621.4 1465.0,628.3 1466.0,629.8 1467.0,629.0 1468.0,613.7 1469.0,626.6 1470.0,615.7 1471.0,611.9 1472.0,619.4 1473.0,625.5 1474.0,629.9 1475.0,629.4 1476.0,619.1 1477.0,617.4 1478.0,613.2 1479.0,616.8 1480.0,620.6 1481.0,613.2 1482.0,622.1 1483.0,619.2 1484.0,629.8 1485.0,629.9 1486.0,624.7 1487.0,626.3 1488.0,624.9 1489.0,618.2 1490.0,616.6 1491.0,625.7 1492.0,619.8 1493.0,611.3 1494.0,614.4 1495.0,623.1 1496.0,627.5 1497.0,629.2 1498.0,624.9 1499.0,618.6 1500.0,618.0 1501.0,622.6 1502.0,623.3 1503.0,625.2 1504.0,625.5 1505.0,624.5 1506.0,627.1 1507.0,627.3 1508.0,629.9 1509.0,629.5 1510.0,627.2 1511.0,624.7 1512.0,629.8 1513.0,626.3 1514.0,618.4 1515.0,629.9 1516.0,627.2 1517.0,617.9 1518.0,628.2 1519.0,627.0 1520.0,626.2 1521.0,629.9 1522.0,628.3 1523.0,629.9 1524.0,629.3 1525.0,624.3 1526.0,621.3 1527.0,623.6 1528.0,628.2 1529.0,623.2 1530.0,630.0 1531.0,630.0 1532.0,621.6 1533.0,617.5 1534.0,624.1 1535.0,628.3 1536.0,628.3 1537.0,628.6 1538.0,608.6 1539.0,609.1 1540.0,607.3 1541.0,618.5 1542.0,626.8 1543.0,617.8 1544.0,622.9 1545.0,628.9 1546.0,625.4 1547.0,624.5 1548.0,621.5 1549.0,616.6 1550.0,628.9 1551.0,629.6 1552.0,617.2 1553.0,626.3 1554.0,625.7 1555.0,628.9 1556.0,628.9 1557.0,624.3 1558.0,621.6 1559.0,628.8 1560.0,623.1 1561.0,630.0 1562.0,627.3 1563.0,624.2 1564.0,625.4 1565.0,617.7 1566.0,613.3 1567.0,623.1 1568.0,615.8 1569.0,616.1 1570.0,613.6 1571.0,626.6 1572.0,624.2 1573.0,613.9 1574.0,616.1 1575.0,627.6 1576.0,627.2 1577.0,624.3 1578.0,615.2 1579.0,616.3 1580.0,615.0 1581.0,626.2 1582.0,627.7 1583.0,609.7 1584.0,609.0 1585.0,614.5 1586.0,627.8 1587.0,610.5 1588.0,612.6 1589.0,615.2 1590.0,630.0 1591.0,625.8 1592.0,623.4 1593.0,626.1 1594.0,625.9 1595.0,622.9 1596.0,627.5 1597.0,630.0 1598.0,620.9 1599.0,630.0 1600.0,625.7 1601.0,618.6 1602.0,628.3 1603.0,630.0 1604.0,626.7 1605.0,630.0 1606.0,630.0 1607.0,630.0 1608.0,630.0 1609.0,626.8 1610.0,628.2 1611.0,627.4 1612.0,630.0 1613.0,628.1 1614.0,630.0 1615.0,630.0 1616.0,627.9 1617.0,629.8 1618.0,623.9 1619.0,626.8 1620.0,622.9 1621.0,629.1 1622.0,630.0 1623.0,628.0 1624.0,619.8 1625.0,615.3 1626.0,617.4 1627.0,615.4 1628.0,623.1 1629.0,627.0 1630.0,625.4 1631.0,629.6 1632.0,629.7 1633.0,624.8 1634.0,627.8 1635.0,630.0 1636.0,627.1 1637.0,630.0 1638.0,621.5 1639.0,622.7 1640.0,628.0 1641.0,629.9 1642.0,626.9 1643.0,628.2 1644.0,617.3 1645.0,614.9 1646.0,615.3 1647.0,628.4 1648.0,618.3 1649.0,616.8 1650.0,613.1 1651.0,625.0 1652.0,627.9 1653.0,629.0 1654.0,622.9 1655.0,625.6 1656.0,627.5 1657.0,629.1 1658.0,619.3 1659.0,621.4 1660.0,625.7 1661.0,615.7 1662.0,612.2 1663.0,614.0 1664.0,617.0 1665.0,614.9 1666.0,609.8 1667.0,609.7 1668.0,613.2 1669.0,620.8 1670.0,628.4 1671.0,624.9 1672.0,625.6 1673.0,628.9 1674.0,612.8 1675.0,609.9 1676.0,608.1 1677.0,613.6 1678.0,616.9 1679.0,618.7 1680.0,623.0 1681.0,630.0 1682.0,618.2 1683.0,611.0 1684.0,608.1 1685.0,611.9 1686.0,615.2 1687.0,628.6 1688.0,615.3 1689.0,615.7 1690.0,625.2 1691.0,628.0 1692.0,613.8 1693.0,613.9 1694.0,616.8 1695.0,614.8 1696.0,613.6 1697.0,617.2 1698.0,626.9 1699.0,624.5 1700.0,620.5 1701.0,615.6 1702.0,611.2 1703.0,620.8 1704.0,621.8 1705.0,627.9 1706.0,628.6 1707.0,623.2 1708.0,630.0 1709.0,624.9 1710.0,629.2 1711.0,620.4 1712.0,622.3 1713.0,619.4 1714.0,626.8 1715.0,626.6 1716.0,621.3 1717.0,614.1 1718.0,614.6 1719.0,615.6 1720.0,621.9 1721.0,616.6 1722.0,622.3 1723.0,625.3 1724.0,626.1 1725.0,626.5 1726.0,629.4 1727.0,622.3 1728.0,616.2 1729.0,623.7 1730.0,617.5 1731.0,623.0 1732.0,627.2 1733.0,620.3 1734.0,617.0 1735.0,628.2 1736.0,622.5 1737.0,612.9 1738.0,614.8 1739.0,626.4 1740.0,613.8 1741.0,616.8 1742.0,630.0 1743.0,630.0 1744.0,624.2 1745.0,621.3 1746.0,611.8 1747.0,616.0 1748.0,614.1 1749.0,620.9 1750.0,620.4 1751.0,623.3 1752.0,626.3 1753.0,628.4 1754.0,618.9 1755.0,629.2 1756.0,630.0 1757.0,621.4 1758.0,625.5 1759.0,616.4 1760.0,613.7 1761.0,610.4 1762.0,614.6 1763.0,623.7 1764.0,625.6 1765.0,625.0 1766.0,620.6 1767.0,625.4 1768.0,630.0 1769.0,629.0 1770.0,616.9 1771.0,628.4 1772.0,626.4 1773.0,618.3 1774.0,623.3 1775.0,620.4 1776.0,615.5 1777.0,630.0 1778.0,630.0 1779.0,629.6 1780.0,630.0 1781.0,623.7 1782.0,621.5 1783.0,619.5 1784.0,628.9 1785.0,626.1 1786.0,626.9 1787.0,623.0 1788.0,621.9 1789.0,619.7 1790.0,622.9 1791.0,610.5 1792.0,610.5 1793.0,610.5 1794.0,619.5 1795.0,615.6 1796.0,620.8 1797.0,618.2 1798.0,609.3 1799.0,610.3 1800.0,616.8 1801.0,627.7 1802.0,628.1 1803.0,625.2 1804.0,608.2 1805.0,612.3 1806.0,619.6 1807.0,610.4 1808.0,610.4 1809.0,608.2 1810.0,610.3 1811.0,610.5 1812.0,629.8 1813.0,629.7 1814.0,630.0 1815.0,619.7 1816.0,630.0 1817.0,624.9 1818.0,619.2 1819.0,624.3 1820.0,625.1 1821.0,623.3 1822.0,617.5 1823.0,610.0 1824.0,622.2 1825.0,622.3 1826.0,626.6 1827.0,624.2 1828.0,617.6 1829.0,630.0 1830.0,624.2 1831.0,620.2 1832.0,626.3 1833.0,628.9 1834.0,623.0 1835.0,625.1 1836.0,624.2 1837.0,616.3 1838.0,625.7 1839.0,630.0 1840.0,630.0 1841.0,624.1 1842.0,629.9 1843.0,629.9 1844.0,625.8 1845.0,627.1 1846.0,627.5 1847.0,627.8 1848.0,630.0 1849.0,630.0 1850.0,624.0 1851.0,626.0 1852.0,625.0 1853.0,627.3 1854.0,621.1 1855.0,630.0 1856.0,621.5 1857.0,618.1 1858.0,626.5 1859.0,615.5 1860.0,613.5 1861.0,619.4 1862.0,627.9 1863.0,625.9 1864.0,622.4 1865.0,629.7 1866.0,624.0" fill="none" stroke="#e8e8e8" stroke-width="1.1"/>
<rect x="1248" y="435" width="619" height="195" fill="none" stroke="#969696" stroke-width="1.5"/>
<line x1="1248.5" y1="435" x2="1248.5" y2="630" stroke="#b02a2a" stroke-width="2" />
<line x1="1400.4" y1="435" x2="1400.4" y2="630" stroke="#e8e800" stroke-width="1" stroke-dasharray="2,2"/>
<circle cx="1401" cy="537.8" r="5" fill="#f0f000"/>
<text x="1237.4" y="440.8" font-size="16" fill="#fff" text-anchor="end" >-10.0</text>
<text x="1237.4" y="479.8" font-size="16" fill="#fff" text-anchor="end" >-20.0</text>
<text x="1237.4" y="518.8" font-size="16" fill="#fff" text-anchor="end" >-30.0</text>
<text x="1237.4" y="557.8" font-size="16" fill="#fff" text-anchor="end" >-40.0</text>
<text x="1237.4" y="596.8" font-size="16" fill="#fff" text-anchor="end" >-50.0</text>
<text x="1237.4" y="635.8" font-size="16" fill="#fff" text-anchor="end" >-60.0</text>
<text x="1275.9" y="648.7" font-size="14" fill="#fff" text-anchor="middle" >-60</text>
<text x="1317.4" y="648.7" font-size="14" fill="#fff" text-anchor="middle" >-40</text>
<text x="1358.9" y="648.7" font-size="14" fill="#fff" text-anchor="middle" >-20</text>
<text x="1400.4" y="648.7" font-size="14" fill="#fff" text-anchor="middle" >0</text>
<text x="1441.9" y="648.7" font-size="14" fill="#fff" text-anchor="middle" >20</text>
<text x="1483.4" y="648.7" font-size="14" fill="#fff" text-anchor="middle" >40</text>
<text x="1524.9" y="648.7" font-size="14" fill="#fff" text-anchor="middle" >60</text>
<text x="1566.4" y="648.7" font-size="14" fill="#fff" text-anchor="middle" >80</text>
<text x="1607.9" y="648.7" font-size="14" fill="#fff" text-anchor="middle" >100</text>
<text x="1649.4" y="648.7" font-size="14" fill="#fff" text-anchor="middle" >120</text>
<text x="1690.9" y="648.7" font-size="14" fill="#fff" text-anchor="middle" >140</text>
<text x="1732.4" y="648.7" font-size="14" fill="#fff" text-anchor="middle" >160</text>
<text x="1773.9" y="648.7" font-size="14" fill="#fff" text-anchor="middle" >180</text>
<text x="1815.4" y="648.7" font-size="14" fill="#fff" text-anchor="middle" >200</text>
<text x="1856.9" y="648.7" font-size="14" fill="#fff" text-anchor="middle" >220</text>
<text transform="translate(1179,533) rotate(-90)" font-size="16" font-weight="bold" fill="#fff" text-anchor="middle" textLength="114" lengthAdjust="spacingAndGlyphs">Magnitude (dB)</text>
<text x="1557.5" y="672.7" font-size="17" fill="#fff" text-anchor="middle" textLength="187" lengthAdjust="spacingAndGlyphs" >Distance Difference (km)</text>
<text x="1422.5" y="712.9" font-size="18" fill="#fff" text-anchor="middle" textLength="87" lengthAdjust="spacingAndGlyphs" >TII Carriers</text>
<polygon points="1876.5,700 1892.8,700 1884.6,713.8" fill="none" stroke="#c8d4e0" stroke-width="1.2"/>
<line x1="1035" y1="739.2" x2="1859" y2="739.2" stroke="#969696" stroke-width="1" />
<line x1="1035" y1="772.7" x2="1859" y2="772.7" stroke="#969696" stroke-width="1" />
<line x1="1035" y1="805.5" x2="1859" y2="805.5" stroke="#969696" stroke-width="1" />
<line x1="1035" y1="839.5" x2="1859" y2="839.5" stroke="#969696" stroke-width="1" />
<line x1="1035" y1="872.4" x2="1859" y2="872.4" stroke="#969696" stroke-width="1" />
<line x1="1035" y1="904.2" x2="1859" y2="904.2" stroke="#969696" stroke-width="1" />
<line x1="1085.8" y1="739" x2="1085.8" y2="904" stroke="#969696" stroke-width="1" />
<line x1="1166.1999999999998" y1="739" x2="1166.1999999999998" y2="904" stroke="#969696" stroke-width="1" />
<line x1="1246.6" y1="739" x2="1246.6" y2="904" stroke="#969696" stroke-width="1" />
<line x1="1327.0" y1="739" x2="1327.0" y2="904" stroke="#969696" stroke-width="1" />
<line x1="1407.3999999999999" y1="739" x2="1407.3999999999999" y2="904" stroke="#969696" stroke-width="1" />
<line x1="1487.8" y1="739" x2="1487.8" y2="904" stroke="#969696" stroke-width="1" />
<line x1="1568.1999999999998" y1="739" x2="1568.1999999999998" y2="904" stroke="#969696" stroke-width="1" />
<line x1="1648.6" y1="739" x2="1648.6" y2="904" stroke="#969696" stroke-width="1" />
<line x1="1729.0" y1="739" x2="1729.0" y2="904" stroke="#969696" stroke-width="1" />
<line x1="1809.3999999999999" y1="739" x2="1809.3999999999999" y2="904" stroke="#969696" stroke-width="1" />
<line x1="1035" y1="902.5" x2="1859" y2="902.5" stroke="#7a7a7a" stroke-width="1" />
<line x1="1138.864" y1="739" x2="1138.864" y2="904" stroke="#f0f000" stroke-width="2" stroke-dasharray="2,2"/>
<line x1="1293.232" y1="739" x2="1293.232" y2="904" stroke="#f0f000" stroke-width="2" stroke-dasharray="2,2"/>
<line x1="1447.6" y1="739" x2="1447.6" y2="904" stroke="#f0f000" stroke-width="2" stroke-dasharray="2,2"/>
<line x1="1601.9679999999998" y1="739" x2="1601.9679999999998" y2="904" stroke="#f0f000" stroke-width="2" stroke-dasharray="2,2"/>
<line x1="1756.3359999999998" y1="739" x2="1756.3359999999998" y2="904" stroke="#f0f000" stroke-width="2" stroke-dasharray="2,2"/>
<polygon points="1138.7,904 1139.4,785.2 1140.6,785.2 1141.3,904" fill="#e8e860"/>
<polygon points="1196.7,904 1197.4,739.0 1198.6,739.0 1199.3,904" fill="#f0f0f0"/>
<polygon points="1235.4,904 1236.1000000000001,739.0 1237.3,739.0 1238.0,904" fill="#f0f0f0"/>
<polygon points="1255.1000000000001,904 1255.8000000000002,739.0 1257.0,739.0 1257.7,904" fill="#f0f0f0"/>
<polygon points="1292.7,904 1293.4,752.2 1294.6,752.2 1295.3,904" fill="#e8e860"/>
<polygon points="1351.1000000000001,904 1351.8000000000002,763.4200000000001 1353.0,763.4200000000001 1353.7,904" fill="#f0f0f0"/>
<polygon points="1389.5,904 1390.2,779.755 1391.3999999999999,779.755 1392.1,904" fill="#f0f0f0"/>
<polygon points="1409.4,904 1410.1000000000001,831.0699999999999 1411.3,831.0699999999999 1412.0,904" fill="#f0f0f0"/>
<polygon points="1448.2,904 1448.9,877.27 1450.1,877.27 1450.8,904" fill="#e8e860"/>
<polygon points="1484.7,904 1485.4,898.06 1486.6,898.06 1487.3,904" fill="#f0f0f0"/>
<polygon points="1505.9,904 1506.6000000000001,805.99 1507.8,805.99 1508.5,904" fill="#f0f0f0"/>
<polygon points="1545.0,904 1545.7,841.96 1546.8999999999999,841.96 1547.6,904" fill="#f0f0f0"/>
<polygon points="1564.6000000000001,904 1565.3000000000002,828.76 1566.5,828.76 1567.2,904" fill="#f0f0f0"/>
<polygon points="1584.1000000000001,904 1584.8000000000002,899.05 1586.0,899.05 1586.7,904" fill="#f0f0f0"/>
<polygon points="1603.0,904 1603.7,844.105 1604.8999999999999,844.105 1605.6,904" fill="#e8e860"/>
<polygon points="1660.7,904 1661.4,823.81 1662.6,823.81 1663.3,904" fill="#f0f0f0"/>
<polygon points="1699.2,904 1699.9,842.785 1701.1,842.785 1701.8,904" fill="#f0f0f0"/>
<polygon points="1718.7,904 1719.4,822.325 1720.6,822.325 1721.3,904" fill="#f0f0f0"/>
<rect x="1035" y="739" width="824" height="165" fill="none" stroke="#969696" stroke-width="1.5"/>
<text x="1021.2" y="745.0" font-size="16" fill="#fff" text-anchor="end" >1.0</text>
<text x="1021.2" y="778.5" font-size="16" fill="#fff" text-anchor="end" >0.8</text>
<text x="1021.2" y="811.3" font-size="16" fill="#fff" text-anchor="end" >0.6</text>
<text x="1021.2" y="845.3" font-size="16" fill="#fff" text-anchor="end" >0.4</text>
<text x="1021.2" y="878.2" font-size="16" fill="#fff" text-anchor="end" >0.2</text>
<text x="1021.2" y="910.0" font-size="16" fill="#fff" text-anchor="end" >0.0</text>
<text x="1085.8" y="923.6" font-size="15.5" fill="#fff" text-anchor="middle" >-900</text>
<text x="1166.1999999999998" y="923.6" font-size="15.5" fill="#fff" text-anchor="middle" >-700</text>
<text x="1246.6" y="923.6" font-size="15.5" fill="#fff" text-anchor="middle" >-500</text>
<text x="1327.0" y="923.6" font-size="15.5" fill="#fff" text-anchor="middle" >-300</text>
<text x="1407.3999999999999" y="923.6" font-size="15.5" fill="#fff" text-anchor="middle" >-100</text>
<text x="1487.8" y="923.6" font-size="15.5" fill="#fff" text-anchor="middle" >100</text>
<text x="1568.1999999999998" y="923.6" font-size="15.5" fill="#fff" text-anchor="middle" >300</text>
<text x="1648.6" y="923.6" font-size="15.5" fill="#fff" text-anchor="middle" >500</text>
<text x="1729.0" y="923.6" font-size="15.5" fill="#fff" text-anchor="middle" >700</text>
<text x="1809.3999999999999" y="923.6" font-size="15.5" fill="#fff" text-anchor="middle" >900</text>
<text transform="translate(979,821) rotate(-90)" font-size="15" font-weight="bold" fill="#fff" text-anchor="middle" textLength="76" lengthAdjust="spacingAndGlyphs">Magnitude</text>
<text x="1447" y="947.8" font-size="16" fill="#fff" text-anchor="middle" textLength="102" lengthAdjust="spacingAndGlyphs" >TII Subcarrier</text>
</svg></body></html>
